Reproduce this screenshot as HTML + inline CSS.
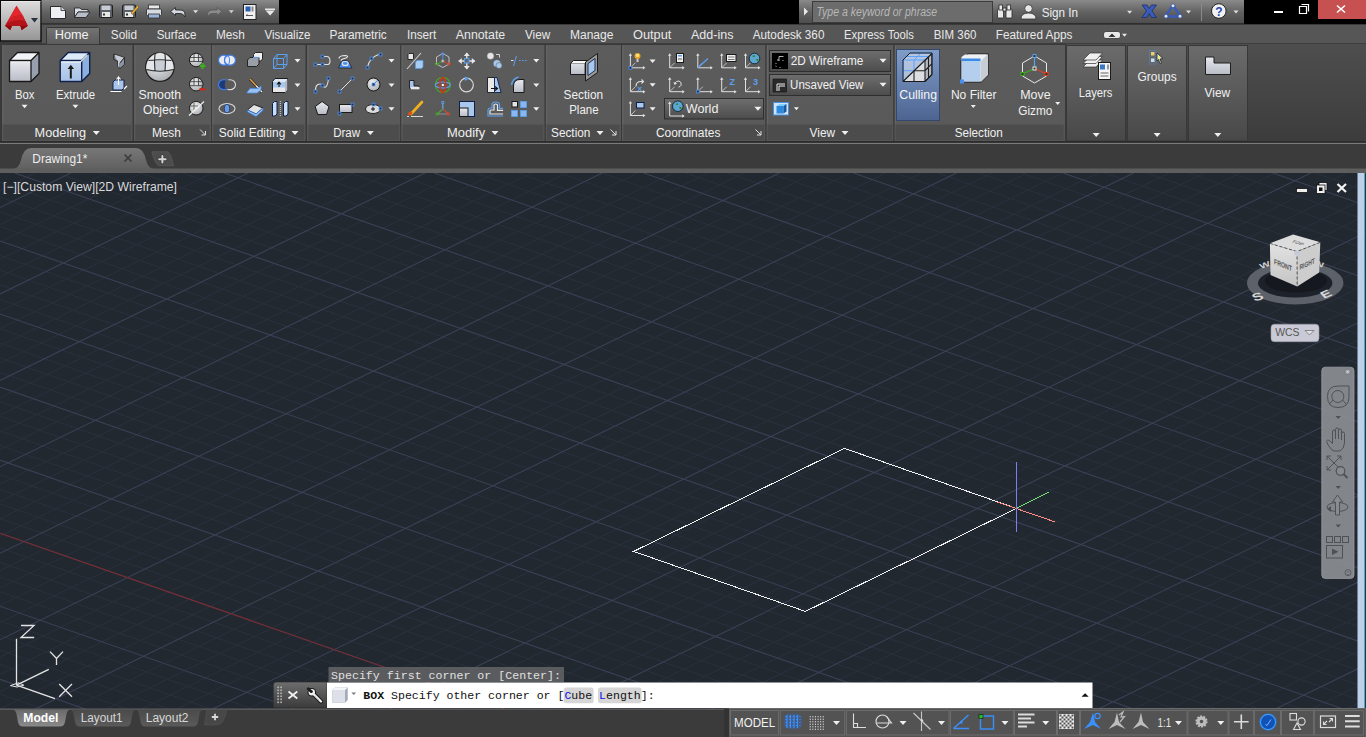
<!DOCTYPE html><html><head><meta charset="utf-8"><style>*{margin:0;padding:0}html,body{width:1366px;height:737px;overflow:hidden;background:#3b3b3b;font-family:"Liberation Sans",sans-serif}</style></head><body><svg width="1366" height="737" viewBox="0 0 1366 737" style="position:absolute;left:0;top:0;font-family:&quot;Liberation Sans&quot;,sans-serif"><defs>
<linearGradient id="gQat" x1="0" y1="0" x2="0" y2="1"><stop offset="0" stop-color="#8a8a8a"/><stop offset=".5" stop-color="#626262"/><stop offset="1" stop-color="#4c4c4c"/></linearGradient>
<linearGradient id="gApp" x1="0" y1="0" x2="0" y2="1"><stop offset="0" stop-color="#dcdcdc"/><stop offset="1" stop-color="#969696"/></linearGradient>
<linearGradient id="gPanel" x1="0" y1="0" x2="0" y2="1"><stop offset="0" stop-color="#5c5c5c"/><stop offset="1" stop-color="#595959"/></linearGradient>
<linearGradient id="gCPanel" x1="0" y1="0" x2="0" y2="1"><stop offset="0" stop-color="#6b6b6b"/><stop offset="1" stop-color="#484848"/></linearGradient>
<linearGradient id="gRib" x1="0" y1="0" x2="0" y2="1"><stop offset="0" stop-color="#4e4e4e"/><stop offset="1" stop-color="#3c3c3c"/></linearGradient>
<linearGradient id="gDrop" x1="0" y1="0" x2="0" y2="1"><stop offset="0" stop-color="#6e6e6e"/><stop offset="1" stop-color="#4c4c4c"/></linearGradient>
<linearGradient id="gCull" x1="0" y1="0" x2="0" y2="1"><stop offset="0" stop-color="#809cc8"/><stop offset="1" stop-color="#4d6491"/></linearGradient>
<linearGradient id="gFtab" x1="0" y1="0" x2="0" y2="1"><stop offset="0" stop-color="#777777"/><stop offset="1" stop-color="#5c5c5c"/></linearGradient>
<linearGradient id="gCmd" x1="0" y1="0" x2="0" y2="1"><stop offset="0" stop-color="#6e6e6e"/><stop offset="1" stop-color="#3a3a3a"/></linearGradient>
<linearGradient id="gWhiteCube" x1="0" y1="0" x2="0" y2="1"><stop offset="0" stop-color="#e8eaee"/><stop offset="1" stop-color="#b8bcc6"/></linearGradient>
<linearGradient id="gBlueFace" x1="0" y1="0" x2="0" y2="1"><stop offset="0" stop-color="#c4d8f0"/><stop offset="1" stop-color="#a6c2e6"/></linearGradient>
<radialGradient id="gSphere" cx=".4" cy=".35" r=".7"><stop offset="0" stop-color="#f4f4f4"/><stop offset="1" stop-color="#a8aab0"/></radialGradient>
<linearGradient id="gVC" x1="0" y1="0" x2="0" y2="1"><stop offset="0" stop-color="#e2e2e2"/><stop offset="1" stop-color="#c4c4c4"/></linearGradient>
<linearGradient id="gModelTab" x1="0" y1="0" x2="0" y2="1"><stop offset="0" stop-color="#6a6a6a"/><stop offset="1" stop-color="#8a8a8a"/></linearGradient>
<linearGradient id="gLayTab" x1="0" y1="0" x2="0" y2="1"><stop offset="0" stop-color="#4a4a4a"/><stop offset="1" stop-color="#5a5a5a"/></linearGradient>
<linearGradient id="gHome" x1="0" y1="0" x2="0" y2="1"><stop offset="0" stop-color="#747474"/><stop offset="1" stop-color="#5c5c5c"/></linearGradient>
</defs>
<rect x="0" y="0" width="1366" height="24" fill="#000" />
<rect x="41" y="0" width="238" height="24" fill="url(#gQat)" />
<rect x="41" y="23" width="238" height="1" fill="#333" />
<path d="M50.5 6.5 H61 L65.5 10.5 V18.5 H50.5Z" fill="#eef0f4" stroke="#2a2a2a" stroke-width="1"/>
<path d="M61 6.5 V10.5 H65.5" fill="#cfd3da" stroke="#2a2a2a" stroke-width=".8"/>
<path d="M74.5 8 H80 L81.5 9.5 H88 V12 H78 L74.5 17.5Z" fill="#d8dce4" stroke="#2a2a2a" stroke-width=".9"/>
<path d="M74.5 17.5 L78 12 H90 L86 17.5Z" fill="#b8bec9" stroke="#2a2a2a" stroke-width=".9"/>
<rect x="99.5" y="5" width="13" height="12.5" fill="#5a5f68" stroke="#202020" stroke-width="1" rx="1"/>
<rect x="101.5" y="5.5" width="9" height="4.5" fill="#c8ccd2"/>
<rect x="102" y="12" width="8" height="5" fill="#e8e8e8"/><rect x="103" y="13.5" width="2" height="2" fill="#333"/>
<rect x="122.5" y="5" width="13" height="12.5" fill="#5a5f68" stroke="#202020" stroke-width="1" rx="1"/>
<rect x="124.5" y="5.5" width="9" height="4.5" fill="#c8ccd2"/>
<rect x="125" y="12" width="8" height="5" fill="#e8e8e8"/><rect x="126" y="13.5" width="2" height="2" fill="#333"/>
<path d="M131 13 L137.5 5.5 L139 7 L132.5 14.5Z" fill="#f0b030" stroke="#553" stroke-width=".6"/>
<rect x="148.5" y="5" width="11" height="4" fill="#e8e8e8" stroke="#333" stroke-width=".8"/>
<rect x="146.5" y="9" width="15" height="6.5" fill="#d8dce2" stroke="#333" stroke-width=".9" rx="1"/>
<rect x="148.5" y="14" width="11" height="4" fill="#9cb4d8" stroke="#333" stroke-width=".8"/>
<path d="M170.5 11.5 L175.5 7.5 V10 H180 Q185 10 185 15 V17 Q183.5 13.5 180 13.5 H175.5 V15.5Z" fill="#d4d8e0" stroke="#2a2a2a" stroke-width=".9"/>
<path d="M193.1 10.3L198.1 10.3L195.6 13.3Z" fill="#e0e0e0"/>
<path d="M222 11.5 L217 7.5 V10 H212.5 Q207.5 10 207.5 15 V17 Q209 13.5 212.5 13.5 H217 V15.5Z" fill="#8a8a8a" stroke="#555" stroke-width=".8"/>
<path d="M228.8 10.3L233.8 10.3L231.3 13.3Z" fill="#d0d0d0"/>
<rect x="243.5" y="4.5" width="12.5" height="15" fill="#f0f0f0" stroke="#222" stroke-width="1"/>
<rect x="245.5" y="6.5" width="5" height="5" fill="#2b5fb0"/><rect x="251.5" y="6.5" width="2" height="5" fill="#888"/>
<path d="M246 15.5 H253 M246 15.5 L247.5 14.5" stroke="#333" stroke-width=".8"/>
<rect x="265" y="8.5" width="10" height="1.5" fill="#e8e8e8"/>
<path d="M265.6 10.5L274.6 10.5L270.1 15.5Z" fill="#e8e8e8"/>
<rect x="799" y="0" width="445" height="24" fill="url(#gQat)" />
<rect x="799" y="23" width="445" height="1" fill="#2e2e2e" />
<path d="M804 7.5 L808 11.5 L804 15.5Z" fill="#e8e8e8"/>
<rect x="812.5" y="1.5" width="180" height="21" fill="#6c6c6c" stroke="#3c3c3c" stroke-width="1"/>
<text x="816.4" y="15.8" font-size="12" fill="#b8b8b8" font-weight="normal" font-family="Liberation Sans" font-style="italic" textLength="120.7" lengthAdjust="spacingAndGlyphs" >Type a keyword or phrase</text>
<g fill="#e8e8e8" stroke="#2a2a2a" stroke-width=".8"><rect x="997.5" y="9" width="6" height="9" rx="1"/><rect x="1006" y="9" width="6" height="9" rx="1"/><rect x="999" y="5" width="3.5" height="5"/><rect x="1007" y="5" width="3.5" height="5"/><rect x="1003" y="8" width="3" height="3"/></g>
<circle cx="1028.5" cy="8.5" r="3.8" fill="#e8e8e8" stroke="#333" stroke-width=".8"/>
<path d="M1021 19 Q1021 13 1028.5 13 Q1036 13 1036 19Z" fill="#e8e8e8" stroke="#333" stroke-width=".8"/>
<text x="1041.7" y="17.1" font-size="12" fill="#eeeeee" font-weight="normal" font-family="Liberation Sans" font-style="normal" textLength="36.4" lengthAdjust="spacingAndGlyphs" >Sign In</text>
<path d="M1127.1 10.7L1132.1 10.7L1129.6 13.7Z" fill="#e0e0e0"/>
<path d="M1142 5 H1147 L1149.2 8.5 L1151.5 5 H1156.5 L1152 11 L1156.5 17.5 H1151.5 L1149.2 13.5 L1147 17.5 H1142 L1146.5 11Z" fill="#3a5bb8" stroke="#1c2d6a" stroke-width=".8"/>
<path d="M1173 5.5 L1180.5 16.5 H1165.5Z" fill="none" stroke="#3a5bb8" stroke-width="2.4" stroke-linejoin="round"/>
<circle cx="1173" cy="5.8" r="2" fill="#dfe6f5" stroke="#2a4a9a" stroke-width=".8"/><circle cx="1166" cy="16.2" r="2" fill="#dfe6f5" stroke="#2a4a9a" stroke-width=".8"/><circle cx="1180" cy="16.2" r="2" fill="#dfe6f5" stroke="#2a4a9a" stroke-width=".8"/>
<path d="M1186.0 10.5L1191.0 10.5L1188.5 13.5Z" fill="#e0e0e0"/>
<rect x="1201" y="3" width="1" height="18" fill="#8a8a8a" />
<circle cx="1218.8" cy="11" r="7.3" fill="#f2f2f2" stroke="#202020" stroke-width="1"/>
<text x="1218.8" y="15.5" font-size="12" font-weight="bold" fill="#2748b0" text-anchor="middle" font-family="Liberation Sans">?</text>
<path d="M1233.5 10.5L1238.5 10.5L1236.0 13.5Z" fill="#e0e0e0"/>
<rect x="1318" y="0" width="48" height="19" fill="#c75050" />
<rect x="1274" y="11" width="9" height="2" fill="#ffffff" />
<path d="M1301.5 4.5 H1308.5 V11.5 M1299.5 6.5 H1306.5 V13.5 H1299.5Z" fill="none" stroke="#fff" stroke-width="1.2"/>
<path d="M1337 5.5 L1345 12.5 M1345 5.5 L1337 12.5" stroke="#fff" stroke-width="1.6"/>
<rect x="42" y="24" width="1324" height="20" fill="#565656" />
<rect x="0" y="24" width="1366" height="1" fill="#3a3a3a" />
<rect x="42" y="43" width="1324" height="1.5" fill="#3e3e3e" />
<path d="M46.5 44 V28.5 Q46.5 27.5 47.5 27.5 H98.5 Q99.5 27.5 99.5 28.5 V44" fill="url(#gHome)" stroke="#363636" stroke-width="1"/>
<text x="54.8" y="39.2" font-size="12" fill="#f2f2f2" font-weight="normal" font-family="Liberation Sans" font-style="normal" textLength="33.9" lengthAdjust="spacingAndGlyphs" >Home</text>
<text x="110.8" y="39.2" font-size="12" fill="#e8e8e8" font-weight="normal" font-family="Liberation Sans" font-style="normal" textLength="26.2" lengthAdjust="spacingAndGlyphs" >Solid</text>
<text x="156.7" y="39.2" font-size="12" fill="#e8e8e8" font-weight="normal" font-family="Liberation Sans" font-style="normal" textLength="39.7" lengthAdjust="spacingAndGlyphs" >Surface</text>
<text x="215.9" y="39.2" font-size="12" fill="#e8e8e8" font-weight="normal" font-family="Liberation Sans" font-style="normal" textLength="28.9" lengthAdjust="spacingAndGlyphs" >Mesh</text>
<text x="264.5" y="39.2" font-size="12" fill="#e8e8e8" font-weight="normal" font-family="Liberation Sans" font-style="normal" textLength="45.9" lengthAdjust="spacingAndGlyphs" >Visualize</text>
<text x="329.5" y="39.2" font-size="12" fill="#e8e8e8" font-weight="normal" font-family="Liberation Sans" font-style="normal" textLength="57.3" lengthAdjust="spacingAndGlyphs" >Parametric</text>
<text x="406.9" y="39.2" font-size="12" fill="#e8e8e8" font-weight="normal" font-family="Liberation Sans" font-style="normal" textLength="29.3" lengthAdjust="spacingAndGlyphs" >Insert</text>
<text x="455.8" y="39.2" font-size="12" fill="#e8e8e8" font-weight="normal" font-family="Liberation Sans" font-style="normal" textLength="49.4" lengthAdjust="spacingAndGlyphs" >Annotate</text>
<text x="524.9" y="39.2" font-size="12" fill="#e8e8e8" font-weight="normal" font-family="Liberation Sans" font-style="normal" textLength="25.3" lengthAdjust="spacingAndGlyphs" >View</text>
<text x="570.0" y="39.2" font-size="12" fill="#e8e8e8" font-weight="normal" font-family="Liberation Sans" font-style="normal" textLength="43.4" lengthAdjust="spacingAndGlyphs" >Manage</text>
<text x="633.0" y="39.2" font-size="12" fill="#e8e8e8" font-weight="normal" font-family="Liberation Sans" font-style="normal" textLength="38.4" lengthAdjust="spacingAndGlyphs" >Output</text>
<text x="691.0" y="39.2" font-size="12" fill="#e8e8e8" font-weight="normal" font-family="Liberation Sans" font-style="normal" textLength="42.4" lengthAdjust="spacingAndGlyphs" >Add-ins</text>
<text x="752.8" y="39.2" font-size="12" fill="#e8e8e8" font-weight="normal" font-family="Liberation Sans" font-style="normal" textLength="71.6" lengthAdjust="spacingAndGlyphs" >Autodesk 360</text>
<text x="844.1" y="39.2" font-size="12" fill="#e8e8e8" font-weight="normal" font-family="Liberation Sans" font-style="normal" textLength="69.8" lengthAdjust="spacingAndGlyphs" >Express Tools</text>
<text x="933.7" y="39.2" font-size="12" fill="#e8e8e8" font-weight="normal" font-family="Liberation Sans" font-style="normal" textLength="42.7" lengthAdjust="spacingAndGlyphs" >BIM 360</text>
<text x="995.8" y="39.2" font-size="12" fill="#e8e8e8" font-weight="normal" font-family="Liberation Sans" font-style="normal" textLength="76.6" lengthAdjust="spacingAndGlyphs" >Featured Apps</text>
<rect x="1103.5" y="31.5" width="17" height="7" rx="2.5" fill="#e8e8e8" stroke="#333" stroke-width=".8"/>
<path d="M1108.5 37 L1112 33.5 L1115.5 37Z" fill="#333"/>
<path d="M1122.0 33.8L1127.0 33.8L1124.5 36.8Z" fill="#e8e8e8"/>
<rect x="0" y="0" width="41.5" height="41.5" fill="#0a0a0a" />
<rect x="1" y="1" width="39.3" height="39.3" fill="url(#gApp)" />
<rect x="1" y="1" width="39.3" height="1" fill="#e8e8e8" />
<path d="M16.5 5.8 L5.1 25.8 L10.2 29.9 L11.9 26.1 H20.4 L21.7 29.9 L27.8 25.8 Z" fill="#b8141a"/>
<path d="M16.5 5.8 L9 19 Q16 14.5 23 15.5 Z" fill="#e2262c"/>
<path d="M9 19 Q16 14.5 23 15.5 L25.5 21 Q16 19 7 23Z" fill="#d01f25"/>
<path d="M7 23 Q16 19 25.5 21 L27.8 25.8 L21.7 29.9 L20.4 26.1 H11.9 L10.2 29.9 L5.1 25.8Z" fill="#b31419"/>
<path d="M5.1 25.8 L10.2 29.9 L11.9 26.1Z M27.8 25.8 L21.7 29.9 L20.4 26.1Z" fill="#8e0c10"/>
<path d="M30.9 18 L38 18 L34.5 22.4Z" fill="#2a3040"/>
<rect x="0" y="44" width="1366" height="98" fill="url(#gRib)" />
<rect x="0" y="44" width="1" height="98" fill="#3a3a3a" />
<rect x="1.5" y="44.5" width="131.5" height="97" fill="url(#gPanel)" stroke="#393939" stroke-width="1"/>
<rect x="2.5" y="45" width="1" height="96" fill="#656565" />
<rect x="3.0" y="124.5" width="128.5" height="16" fill="#4c4c4c" stroke="#555" stroke-width="1"/>
<rect x="133.5" y="44.5" width="78.0" height="97" fill="url(#gPanel)" stroke="#393939" stroke-width="1"/>
<rect x="134.5" y="45" width="1" height="96" fill="#656565" />
<rect x="135.0" y="124.5" width="75.0" height="16" fill="#4c4c4c" stroke="#555" stroke-width="1"/>
<rect x="211.5" y="44.5" width="94.5" height="97" fill="url(#gPanel)" stroke="#393939" stroke-width="1"/>
<rect x="212.5" y="45" width="1" height="96" fill="#656565" />
<rect x="213.0" y="124.5" width="91.5" height="16" fill="#4c4c4c" stroke="#555" stroke-width="1"/>
<rect x="306.5" y="44.5" width="94.3" height="97" fill="url(#gPanel)" stroke="#393939" stroke-width="1"/>
<rect x="307.5" y="45" width="1" height="96" fill="#656565" />
<rect x="308.0" y="124.5" width="91.3" height="16" fill="#4c4c4c" stroke="#555" stroke-width="1"/>
<rect x="400.8" y="44.5" width="144.4" height="97" fill="url(#gPanel)" stroke="#393939" stroke-width="1"/>
<rect x="401.8" y="45" width="1" height="96" fill="#656565" />
<rect x="402.3" y="124.5" width="141.4" height="16" fill="#4c4c4c" stroke="#555" stroke-width="1"/>
<rect x="545.2" y="44.5" width="76.3" height="97" fill="url(#gPanel)" stroke="#393939" stroke-width="1"/>
<rect x="546.2" y="45" width="1" height="96" fill="#656565" />
<rect x="546.7" y="124.5" width="73.3" height="16" fill="#4c4c4c" stroke="#555" stroke-width="1"/>
<rect x="621.5" y="44.5" width="144.5" height="97" fill="url(#gPanel)" stroke="#393939" stroke-width="1"/>
<rect x="622.5" y="45" width="1" height="96" fill="#656565" />
<rect x="623.0" y="124.5" width="141.5" height="16" fill="#4c4c4c" stroke="#555" stroke-width="1"/>
<rect x="766.0" y="44.5" width="128.0" height="97" fill="url(#gPanel)" stroke="#393939" stroke-width="1"/>
<rect x="767" y="45" width="1" height="96" fill="#656565" />
<rect x="767.5" y="124.5" width="125.0" height="16" fill="#4c4c4c" stroke="#555" stroke-width="1"/>
<rect x="894.0" y="44.5" width="171.5" height="97" fill="url(#gPanel)" stroke="#393939" stroke-width="1"/>
<rect x="895" y="45" width="1" height="96" fill="#656565" />
<rect x="895.5" y="124.5" width="168.5" height="16" fill="#4c4c4c" stroke="#555" stroke-width="1"/>
<rect x="1066.5" y="45.5" width="59.0" height="95.5" fill="url(#gCPanel)" stroke="#383838" stroke-width="1"/>
<rect x="1127.5" y="45.5" width="59.0" height="95.5" fill="url(#gCPanel)" stroke="#383838" stroke-width="1"/>
<rect x="1188.5" y="45.5" width="59.0" height="95.5" fill="url(#gCPanel)" stroke="#383838" stroke-width="1"/>
<rect x="0" y="141" width="1366" height="1.5" fill="#2c2c2c" />
<text x="34.6" y="137.2" font-size="12" fill="#f0f0f0" font-weight="normal" font-family="Liberation Sans" font-style="normal" textLength="51.6" lengthAdjust="spacingAndGlyphs" >Modeling</text>
<path d="M92.8 131.0L99.8 131.0L96.3 135.0Z" fill="#f0f0f0"/>
<text x="151.9" y="137.2" font-size="12" fill="#f0f0f0" font-weight="normal" font-family="Liberation Sans" font-style="normal" textLength="29.0" lengthAdjust="spacingAndGlyphs" >Mesh</text>
<path d="M200 129.5 L205.5 135 M205.5 131 V135 H201.5" stroke="#e0e0e0" stroke-width="1" fill="none"/>
<text x="218.8" y="137.2" font-size="12" fill="#f0f0f0" font-weight="normal" font-family="Liberation Sans" font-style="normal" textLength="66.5" lengthAdjust="spacingAndGlyphs" >Solid Editing</text>
<path d="M291.5 131.0L298.5 131.0L295.0 135.0Z" fill="#f0f0f0"/>
<text x="333.2" y="137.2" font-size="12" fill="#f0f0f0" font-weight="normal" font-family="Liberation Sans" font-style="normal" textLength="26.9" lengthAdjust="spacingAndGlyphs" >Draw</text>
<path d="M366.9 131.0L373.9 131.0L370.4 135.0Z" fill="#f0f0f0"/>
<text x="447.0" y="137.2" font-size="12" fill="#f0f0f0" font-weight="normal" font-family="Liberation Sans" font-style="normal" textLength="38.1" lengthAdjust="spacingAndGlyphs" >Modify</text>
<path d="M491.5 131.0L498.5 131.0L495.0 135.0Z" fill="#f0f0f0"/>
<text x="551.0" y="137.2" font-size="12" fill="#f0f0f0" font-weight="normal" font-family="Liberation Sans" font-style="normal" textLength="39.4" lengthAdjust="spacingAndGlyphs" >Section</text>
<path d="M596.5 131.0L603.5 131.0L600.0 135.0Z" fill="#f0f0f0"/>
<path d="M610.5 129.5 L616 135 M616 131 V135 H612" stroke="#e0e0e0" stroke-width="1" fill="none"/>
<text x="655.9" y="137.2" font-size="12" fill="#f0f0f0" font-weight="normal" font-family="Liberation Sans" font-style="normal" textLength="64.5" lengthAdjust="spacingAndGlyphs" >Coordinates</text>
<path d="M755.5 129.5 L761 135 M761 131 V135 H757" stroke="#e0e0e0" stroke-width="1" fill="none"/>
<text x="809.6" y="137.2" font-size="12" fill="#f0f0f0" font-weight="normal" font-family="Liberation Sans" font-style="normal" textLength="25.4" lengthAdjust="spacingAndGlyphs" >View</text>
<path d="M841.5 131.0L848.5 131.0L845.0 135.0Z" fill="#f0f0f0"/>
<text x="954.7" y="137.2" font-size="12" fill="#f0f0f0" font-weight="normal" font-family="Liberation Sans" font-style="normal" textLength="48.1" lengthAdjust="spacingAndGlyphs" >Selection</text>
<path d="M9.5 60.5H31.0V81.5H9.5Z" fill="url(#gWhiteCube)"/>
<path d="M9.5 60.5L17.5 52.5H39.0L31.0 60.5Z" fill="#f3f4f7"/>
<path d="M31.0 60.5L39.0 52.5V73.5L31.0 81.5Z" fill="#98a0ae"/>
<path d="M9.5 60.5L17.5 52.5H39.0V73.5L31.0 81.5H9.5Z M9.5 60.5H31.0L39.0 52.5 M31.0 60.5V81.5" fill="none" stroke="#181818" stroke-width="1.3" stroke-linejoin="round"/>
<path d="M11 62 H30" stroke="#fff" stroke-width="1" opacity=".6"/>
<path d="M60.2 60.5H81.7V81.5H60.2Z" fill="url(#gBlueFace)"/>
<path d="M60.2 60.5L68.2 52.5H89.7L81.7 60.5Z" fill="#dce9f8"/>
<path d="M81.7 60.5L89.7 52.5V73.5L81.7 81.5Z" fill="#8cb0de"/>
<path d="M60.2 60.5L68.2 52.5H89.7V73.5L81.7 81.5H60.2Z M60.2 60.5H81.7L89.7 52.5 M81.7 60.5V81.5" fill="none" stroke="#10204a" stroke-width="1.4" stroke-linejoin="round"/>
<path d="M61.5 62 H80.5 L87.5 55" stroke="#fff" stroke-width="1.1" fill="none" opacity=".9"/>
<path d="M70.8 78.5 V68" stroke="#1a1a1a" stroke-width="2"/><path d="M67.6 69 L70.8 64.8 L74 69Z" fill="#1a1a1a"/>
<text x="15.0" y="98.8" font-size="12" fill="#f0f0f0" font-weight="normal" font-family="Liberation Sans" font-style="normal" textLength="19.5" lengthAdjust="spacingAndGlyphs" >Box</text>
<text x="56.0" y="98.9" font-size="12" fill="#f0f0f0" font-weight="normal" font-family="Liberation Sans" font-style="normal" textLength="39.2" lengthAdjust="spacingAndGlyphs" >Extrude</text>
<path d="M21.6 104.8L27.6 104.8L24.6 108.2Z" fill="#f0f0f0"/>
<path d="M72.4 104.8L78.4 104.8L75.4 108.2Z" fill="#f0f0f0"/>
<path d="M114 54 L119 55.5 L124.5 57.5 L120 63 V68.5 L117.5 66.5 V61 L114 59.5Z" fill="#c8ccd6" stroke="#222" stroke-width=".8"/>
<path d="M117.5 61 L114 59.5 V54 M120 63 L124.5 57.5 V64.5 L120 68.5" fill="#8a94a6" stroke="#222" stroke-width=".8"/>
<path d="M113 82 L115 80 H124 V88 L122 90 H113Z" fill="#a8c4e8" stroke="#10204a" stroke-width="1"/>
<path d="M118.5 85 V77.5 M116.5 79.5 L118.5 77 L120.5 79.5" stroke="#fff" stroke-width="1.1" fill="none"/>
<path d="M110.5 91.5 H121.5 M124 89 L127 86" stroke="#fff" stroke-width="1.2"/>
<circle cx="159.9" cy="67.1" r="14.3" fill="url(#gSphere)" stroke="#1e1e1e" stroke-width="1.2"/>
<path d="M146.2 69 Q160 72.5 173.6 69 Q173 55 160 52.8 Q147 55 146.2 69Z" fill="#e4e6ea"/>
<path d="M155 61 H165 V70.8 Q160 71.3 155 70.8Z" fill="#c8cdd6"/>
<path d="M148.5 60.5 Q160 59 171.5 60.5 M146.2 69.5 Q160 73 173.6 69.5 M155 53.8 Q154 62 155 71 M165 53.8 Q166 62 165 71" stroke="#2a2a2a" stroke-width="1.1" fill="none"/>
<text x="138.6" y="98.7" font-size="12" fill="#f0f0f0" font-weight="normal" font-family="Liberation Sans" font-style="normal" textLength="42.5" lengthAdjust="spacingAndGlyphs" >Smooth</text>
<text x="143.1" y="114.2" font-size="12" fill="#f0f0f0" font-weight="normal" font-family="Liberation Sans" font-style="normal" textLength="35.0" lengthAdjust="spacingAndGlyphs" >Object</text>
<circle cx="196.2" cy="60.0" r="6.8" fill="url(#gSphere)" stroke="#1e1e1e" stroke-width="1"/>
<path d="M189.8 57.5 H202.6 M189.8 61.5 H202.6 M194 54.0 V61.5 M198.5 54.0 V61.5" stroke="#333" stroke-width=".8"/>
<circle cx="196.2" cy="84.2" r="6.8" fill="url(#gSphere)" stroke="#1e1e1e" stroke-width="1"/>
<path d="M189.8 81.7 H202.6 M189.8 85.7 H202.6 M194 78.2 V85.7 M198.5 78.2 V85.7" stroke="#333" stroke-width=".8"/>
<circle cx="196.2" cy="108.2" r="6.8" fill="url(#gSphere)" stroke="#1e1e1e" stroke-width="1"/>
<path d="M199.8 66 H205.5 M202.6 63 V69" stroke="#3cb018" stroke-width="2.2"/>
<path d="M199.5 89.3 H205.5" stroke="#e02010" stroke-width="2"/>
<path d="M194 103 V110 M189.8 106 H198" stroke="#444" stroke-width=".8"/><path d="M189 115.5 L204 101.5" stroke="#f0f0f0" stroke-width="1.2"/>
<ellipse cx="224" cy="60.2" rx="5.5" ry="5" fill="#e8eaee" stroke="#3f7ee8" stroke-width="1.2"/><ellipse cx="230" cy="60.2" rx="5.5" ry="5" fill="#e8eaee" stroke="#3f7ee8" stroke-width="1.2"/>
<ellipse cx="227" cy="60.2" rx="2.5" ry="4.5" fill="none" stroke="#3f7ee8" stroke-width="1"/>
<ellipse cx="230" cy="84.7" rx="5.5" ry="5" fill="none" stroke="#e0e0e0" stroke-width="1.1"/><ellipse cx="224" cy="84.7" rx="5.5" ry="5" fill="#1c3a78" stroke="#3f7ee8" stroke-width="1.2"/>
<ellipse cx="227.5" cy="84.7" rx="2.7" ry="4.6" fill="#5a5a5a"/>
<ellipse cx="227" cy="108.6" rx="8" ry="5" fill="none" stroke="#d8d8d8" stroke-width="1.1"/><ellipse cx="227" cy="108.6" rx="2.6" ry="4.2" fill="#6c9ae0" stroke="#1c3a78" stroke-width=".8"/>
<path d="M253.5 54.5 L255.5 52.5 H262.5 V59 L260.5 61 H253.5Z" fill="#f0f0f0" stroke="#1a1a1a" stroke-width=".9"/>
<path d="M247.5 60 L250 57.5 H259 V64 L256.5 66.5 H247.5Z" fill="#9a9ea6" stroke="#1a1a1a" stroke-width=".9"/>
<path d="M253 57.5 H259" stroke="#5a9ae8" stroke-width="1.2"/>
<path d="M250 79 L262 92" stroke="#1a1a1a" stroke-width="2.6"/><path d="M250 79 L256 85.5" stroke="#e0a050" stroke-width="1.6"/><path d="M256 85.5 L262 92" stroke="#e8e8e8" stroke-width="1.6"/>
<path d="M247 92.5 L250 88.5 H258 L261 86 V90 L257 93 H247Z" fill="#9ac0ee" stroke="#4a8ae8" stroke-width=".8"/>
<path d="M247.5 110 L254 104.5 L263 108 L256 114Z" fill="#e4e4e4" stroke="#1a1a1a" stroke-width=".9"/>
<path d="M247.5 110 V112 L256 116.5 L263 110.5 V108 L256 114Z" fill="#9ac4ee" stroke="#3a7ad8" stroke-width=".9"/>
<path d="M273.5 58.5 H283.5 V68.5 H273.5Z M277 54.5 H287 V64.5 H277Z M273.5 58.5 L277 54.5 M283.5 58.5 L287 54.5 M283.5 68.5 L287 64.5 M273.5 68.5 L277 64.5" fill="none" stroke="#5aa0f0" stroke-width="1"/>
<path d="M272.5 81.5 L275 78.5 H287.5 V90 L285 92.5 H272.5Z" fill="#dde8f6" stroke="#1a1a1a" stroke-width="1"/>
<path d="M273 82 H285 V87.5 H273Z" fill="#a8c8ee"/><path d="M273 88 H285 V92 H273Z" fill="#e8e8e8"/><path d="M285 82 L287.5 79 V90 L285 92.5Z" fill="#b0b8c4"/>
<path d="M279 87 V83 M277 84.5 L279 82.2 L281 84.5" stroke="#111" stroke-width="1.1" fill="none"/>
<path d="M272.5 103.5 L274.5 101.5 H277 V114 L275 116 H272.5Z" fill="#c8def6" stroke="#10204a" stroke-width="1"/>
<path d="M283.5 103.5 L285.5 101.5 H288 V114 L286 116 H283.5Z" fill="#c8def6" stroke="#10204a" stroke-width="1"/>
<path d="M280.3 101 V117" stroke="#e8e8e8" stroke-width=".9" stroke-dasharray="1 1"/>
<path d="M294.5 59.0L300.5 59.0L297.5 62.5Z" fill="#f0f0f0"/>
<path d="M294.5 83.5L300.5 83.5L297.5 87.0Z" fill="#f0f0f0"/>
<path d="M294.5 107.3L300.5 107.3L297.5 110.8Z" fill="#f0f0f0"/>
<path d="M315.5 64.5 H328 Q330 64.5 330 61 Q330 56.5 326.5 56.5 H322.5" stroke="#e0e0e0" stroke-width="1.1" fill="none"/>
<rect x="314.1" y="63.1" width="2.8" height="2.8" fill="#2a2a2a" stroke="#4a90f0" stroke-width=".85"/>
<rect x="321.1" y="63.1" width="2.8" height="2.8" fill="#2a2a2a" stroke="#4a90f0" stroke-width=".85"/>
<rect x="321.1" y="55.1" width="2.8" height="2.8" fill="#2a2a2a" stroke="#4a90f0" stroke-width=".85"/>
<path d="M339 58.5 Q339 55.5 345.5 55.5 Q349.5 56 346 58 Q340 59.5 341.5 61 Q345 62.5 348 60.5" stroke="#e8e8e8" stroke-width="1.1" fill="none"/>
<path d="M338.5 68 L342 60.5 H348 L352 68Z" fill="#4a8ef0" stroke="#1a1a1a" stroke-width=".7"/>
<ellipse cx="345.2" cy="63.5" rx="3" ry="2" fill="none" stroke="#e8e8e8" stroke-width="1.1"/>
<path d="M367.5 67.5 Q369 58 378.5 54.5" stroke="#e0e0e0" stroke-width="1.1" fill="none"/>
<rect x="366.1" y="66.1" width="2.8" height="2.8" fill="#2a2a2a" stroke="#4a90f0" stroke-width=".85"/>
<rect x="370.1" y="57.1" width="2.8" height="2.8" fill="#2a2a2a" stroke="#4a90f0" stroke-width=".85"/>
<rect x="379.1" y="53.1" width="2.8" height="2.8" fill="#2a2a2a" stroke="#4a90f0" stroke-width=".85"/>
<path d="M315.5 91.5 Q315 84 320 84 Q322.5 84 323.5 86.5 Q326.5 89 328 82 L328.5 78.5" stroke="#e0e0e0" stroke-width="1.1" fill="none"/>
<rect x="314.1" y="90.1" width="2.8" height="2.8" fill="#2a2a2a" stroke="#4a90f0" stroke-width=".85"/>
<rect x="321.1" y="84.1" width="2.8" height="2.8" fill="#2a2a2a" stroke="#4a90f0" stroke-width=".85"/>
<rect x="327.1" y="77.1" width="2.8" height="2.8" fill="#2a2a2a" stroke="#4a90f0" stroke-width=".85"/>
<path d="M339.5 91.5 L352.5 78.5" stroke="#e0e0e0" stroke-width="1"/>
<rect x="338.1" y="90.1" width="2.8" height="2.8" fill="#2a2a2a" stroke="#4a90f0" stroke-width=".85"/>
<rect x="351.1" y="77.1" width="2.8" height="2.8" fill="#2a2a2a" stroke="#4a90f0" stroke-width=".85"/>
<circle cx="373.5" cy="84.5" r="6.5" fill="url(#gSphere)" stroke="#1a1a1a" stroke-width="1"/><path d="M373.5 84.5 L378 80" stroke="#4a90f0" stroke-width="1"/>
<rect x="372.1" y="83.1" width="2.8" height="2.8" fill="#2a2a2a" stroke="#4a90f0" stroke-width=".85"/>
<path d="M322.1 101.5 L329 106.5 L326.5 114.5 H317.7 L315.2 106.5Z" fill="url(#gWhiteCube)" stroke="#1a1a1a" stroke-width="1"/>
<rect x="339.5" y="104.5" width="12.5" height="8" fill="url(#gWhiteCube)" stroke="#1a1a1a" stroke-width="1"/>
<rect x="338.1" y="112.1" width="2.8" height="2.8" fill="#2a2a2a" stroke="#4a90f0" stroke-width=".85"/>
<rect x="351.1" y="103.1" width="2.8" height="2.8" fill="#2a2a2a" stroke="#4a90f0" stroke-width=".85"/>
<ellipse cx="373" cy="109" rx="7.5" ry="4.5" fill="#dcdcdc" stroke="#1a1a1a" stroke-width=".9"/><path d="M373 107 V111 M371 109 H375" stroke="#111" stroke-width="1"/>
<rect x="372.1" y="103.1" width="2.8" height="2.8" fill="#2a2a2a" stroke="#4a90f0" stroke-width=".85"/>
<rect x="379.1" y="107.1" width="2.8" height="2.8" fill="#2a2a2a" stroke="#4a90f0" stroke-width=".85"/>
<path d="M388.5 59.0L394.5 59.0L391.5 62.5Z" fill="#f0f0f0"/>
<path d="M388.5 83.5L394.5 83.5L391.5 87.0Z" fill="#f0f0f0"/>
<path d="M388.5 107.3L394.5 107.3L391.5 110.8Z" fill="#f0f0f0"/>
<path d="M407 69 L421 53" stroke="#d0d0d0" stroke-width="1.1"/>
<path d="M408 54.5 L409 53.5 H413.5 V58.5 L412.5 59.5 H408Z" fill="#e8e8e8" stroke="#1a1a1a" stroke-width=".9"/>
<path d="M415.5 62 L417 60.5 H423 V67 L421.5 68.5 H415.5Z" fill="#a8cbf2" stroke="#5a9ae8" stroke-width=".8"/>
<path d="M442.8 53.5 L449 57 V64 L442.8 67.5 L436.5 64 V57Z" fill="none" stroke="#c8c8c8" stroke-width=".9"/>
<path d="M442.8 61 V54" stroke="#4a90f0" stroke-width="1"/><path d="M442.8 61 L437.5 64" stroke="#3cb018" stroke-width="1"/><path d="M442.8 61 L448.5 64" stroke="#e04020" stroke-width="1"/>
<circle cx="442.8" cy="54" r="1.2" fill="none" stroke="#4a90f0"/><circle cx="436.5" cy="64" r="1.2" fill="none" stroke="#3cb018"/><circle cx="449" cy="64" r="1.2" fill="none" stroke="#e04020"/><circle cx="442.8" cy="61" r="1.2" fill="#ddd" stroke="#999"/>
<path d="M466.8 53 V69 M458.8 61 H474.8" stroke="#e0e0e0" stroke-width="1.4"/>
<path d="M463.8 56 L466.8 52.5 L469.8 56Z M463.8 66 L466.8 69.5 L469.8 66Z M461.8 58 L458.3 61 L461.8 64Z M471.8 58 L475.3 61 L471.8 64Z" fill="#e8e8e8"/>
<rect x="464.5" y="58.5" width="4.5" height="4.5" fill="#666" stroke="#5aa0f0" stroke-width="1"/>
<circle cx="490.5" cy="56" r="3.6" fill="#e4e4e4" stroke="#555" stroke-width=".5"/><circle cx="497" cy="63.5" r="3.8" fill="#a8c8ee" stroke="#555" stroke-width=".5"/><circle cx="499" cy="65.5" r="3" fill="#a8c8ee" stroke="#555" stroke-width=".5"/>
<path d="M496 54.5 H499.5 V57.5" stroke="#e0e0e0" stroke-width=".9" fill="none"/>
<path d="M511 60.5 H513.5" stroke="#e0e0e0" stroke-width="1"/><path d="M519 60.5 H527" stroke="#5aa0f0" stroke-width="1" stroke-dasharray="1.6 1.4"/><path d="M516.5 56 L513.5 66" stroke="#5aa0f0" stroke-width="1"/>
<path d="M409.5 80.5 H414 V86 H419 V89.5 H411 L409.5 88Z" fill="#a8c4e8" stroke="#1a1a1a" stroke-width=".9"/>
<path d="M411 87 H419.5 V89.5 H411Z" fill="#e8e8e8"/>
<ellipse cx="442.8" cy="85" rx="7.5" ry="7.5" fill="none" stroke="#3cb018" stroke-width="1.1"/><ellipse cx="442.8" cy="85" rx="7.5" ry="3" fill="none" stroke="#5aa0f0" stroke-width="1.1"/><ellipse cx="442.8" cy="85" rx="3" ry="7.5" fill="none" stroke="#e03010" stroke-width="1.4"/>
<rect x="441.8" y="84" width="2" height="2" fill="#fff"/>
<circle cx="466.5" cy="85" r="6.8" fill="none" stroke="#d8d8d8" stroke-width="1.2"/><path d="M464.5 76.5 L469 78.5 L465 81Z" fill="#5aa0f0"/>
<path d="M487.5 77.5 H494.5 V92.5 H487.5Z" fill="#e8e8e8" stroke="#1a1a1a" stroke-width=".9"/><path d="M494.5 77.5 H497 L501 92.5 H494.5Z" fill="#a8c8ee" stroke="#10204a" stroke-width=".9"/>
<path d="M491 88.5 H497 M495 86.5 L497.5 88.5 L495 90.5" stroke="#111" stroke-width="1.1" fill="none"/>
<path d="M513.5 92.5 V86 Q513.5 79.5 520 79.5 H524 V92.5Z" fill="url(#gWhiteCube)" stroke="#1a1a1a" stroke-width="1"/>
<path d="M511.5 85 Q512.5 78.5 518.5 77" stroke="#5aa0f0" stroke-width="1.4" fill="none"/>
<path d="M411 114 L422 102" stroke="#f0b020" stroke-width="2.6" stroke-linecap="round"/><path d="M408 115 Q408 111 411.5 111.5 L412.5 113 Q412 116 408 115Z" fill="#e05010"/>
<path d="M407 116.5 H409 M411 116.5 H423" stroke="#d8d8d8" stroke-width="1"/>
<path d="M442.8 103 V109 L437 114 H448.5 L442.8 109" fill="none" stroke="#999" stroke-width=".8"/><path d="M442.8 103 V109" stroke="#5aa0f0" stroke-width="1"/><path d="M437 114 L442.8 109" stroke="#3cb018" stroke-width="1"/><path d="M448.5 114 L442.8 109" stroke="#e04020" stroke-width="1"/>
<rect x="441.8" y="101.5" width="2" height="2" fill="none" stroke="#5aa0f0" stroke-width=".8"/><rect x="436" y="113" width="2" height="2" fill="none" stroke="#3cb018" stroke-width=".8"/><rect x="447.5" y="113" width="2" height="2" fill="none" stroke="#e04020" stroke-width=".8"/>
<rect x="459.5" y="101.5" width="15" height="15" fill="#a8c8ee" stroke="#10204a" stroke-width="1"/><rect x="459.5" y="108" width="8.5" height="8.5" fill="url(#gWhiteCube)" stroke="#1a1a1a" stroke-width="1"/>
<path d="M503.1 116 H488 V110.5 Q488 108 490.5 108 H492 V104.5 Q492 102 495.5 102 Q499.5 102 499.5 104.5 V108.3 H503.1" fill="none" stroke="#5aa0f0" stroke-width="1.2"/>
<path d="M503.1 114 H490 V111 Q490 110 491 110 H494 V105 Q494 104 495.5 104 Q497.5 104 497.5 105 V110.3 H503.1" fill="none" stroke="#e8e8e8" stroke-width="1.2"/>
<rect x="512" y="101.5" width="5.5" height="5.5" fill="#e4e4e4" stroke="#1a1a1a" stroke-width="1"/><rect x="520.5" y="101.5" width="6" height="6" fill="#8ab8ee" stroke="#5aa0f0" stroke-width=".8"/><rect x="511.5" y="110.5" width="6" height="6" fill="#8ab8ee" stroke="#5aa0f0" stroke-width=".8"/><rect x="520.5" y="110.5" width="6" height="6" fill="#8ab8ee" stroke="#5aa0f0" stroke-width=".8"/>
<path d="M533.3 59.0L539.3 59.0L536.3 62.5Z" fill="#f0f0f0"/>
<path d="M533.3 83.5L539.3 83.5L536.3 87.0Z" fill="#f0f0f0"/>
<path d="M533.3 107.3L539.3 107.3L536.3 110.8Z" fill="#f0f0f0"/>
<path d="M570.5 63.5 L573.5 60.5 H588 V71.5 L585 74.5 H570.5Z" fill="url(#gWhiteCube)" stroke="#1a1a1a" stroke-width="1"/>
<path d="M570.5 63.5 H585 V74.5 M585 63.5 L588 60.5" fill="none" stroke="#1a1a1a" stroke-width=".8"/><path d="M571 63.5 L574 61 H587.5 L584.5 63.5Z" fill="#f8f8f8"/>
<path d="M585.5 62 L597.5 53.5 V72.5 L585.5 81Z" fill="#9a9a9a" stroke="#1a1a1a" stroke-width="1"/>
<path d="M588 63.5 L595 58.5 V70.5 L588 75.5Z" fill="#a8c8ee" stroke="#10204a" stroke-width=".9"/>
<text x="563.6" y="98.7" font-size="12" fill="#f0f0f0" font-weight="normal" font-family="Liberation Sans" font-style="normal" textLength="39.5" lengthAdjust="spacingAndGlyphs" >Section</text>
<text x="569.2" y="114.2" font-size="12" fill="#f0f0f0" font-weight="normal" font-family="Liberation Sans" font-style="normal" textLength="29.4" lengthAdjust="spacingAndGlyphs" >Plane</text>
<path d="M630.4 54.3 V67.8 H643.9" fill="none" stroke="#e0e0e0" stroke-width="1"/>
<path d="M628.7 55.8 L630.4 53.3 L632.1 55.8Z M642.9 66.1 L645.4 67.8 L642.9 69.5Z" fill="#e0e0e0"/>
<path d="M630.4 67.8 L635.4 62.8" stroke="#d8d8d8" stroke-width=".8"/>
<path d="M669.7 54.3 V67.8 H683.2" fill="none" stroke="#e0e0e0" stroke-width="1"/>
<path d="M668.0 55.8 L669.7 53.3 L671.4 55.8Z M682.2 66.1 L684.7 67.8 L682.2 69.5Z" fill="#e0e0e0"/>
<path d="M669.7 67.8 L674.7 62.8" stroke="#d8d8d8" stroke-width=".8"/>
<path d="M697.8 54.3 V67.8 H711.3" fill="none" stroke="#e0e0e0" stroke-width="1"/>
<path d="M696.1 55.8 L697.8 53.3 L699.5 55.8Z M710.3 66.1 L712.8 67.8 L710.3 69.5Z" fill="#e0e0e0"/>
<path d="M697.8 67.8 L702.8 62.8" stroke="#d8d8d8" stroke-width=".8"/>
<path d="M721.7 54.3 V67.8 H735.2" fill="none" stroke="#e0e0e0" stroke-width="1"/>
<path d="M720.0 55.8 L721.7 53.3 L723.4 55.8Z M734.2 66.1 L736.7 67.8 L734.2 69.5Z" fill="#e0e0e0"/>
<path d="M721.7 67.8 L726.7 62.8" stroke="#d8d8d8" stroke-width=".8"/>
<path d="M745.5 54.3 V67.8 H759.0" fill="none" stroke="#e0e0e0" stroke-width="1"/>
<path d="M743.8 55.8 L745.5 53.3 L747.2 55.8Z M758.0 66.1 L760.5 67.8 L758.0 69.5Z" fill="#e0e0e0"/>
<path d="M745.5 67.8 L750.5 62.8" stroke="#d8d8d8" stroke-width=".8"/>
<path d="M630.4 78.2 V91.7 H643.9" fill="none" stroke="#e0e0e0" stroke-width="1"/>
<path d="M628.7 79.7 L630.4 77.2 L632.1 79.7Z M642.9 90.0 L645.4 91.7 L642.9 93.4Z" fill="#e0e0e0"/>
<path d="M630.4 91.7 L635.4 86.7" stroke="#d8d8d8" stroke-width=".8"/>
<path d="M669.7 78.2 V91.7 H683.2" fill="none" stroke="#e0e0e0" stroke-width="1"/>
<path d="M668.0 79.7 L669.7 77.2 L671.4 79.7Z M682.2 90.0 L684.7 91.7 L682.2 93.4Z" fill="#e0e0e0"/>
<path d="M669.7 91.7 L674.7 86.7" stroke="#d8d8d8" stroke-width=".8"/>
<path d="M697.8 78.2 V91.7 H711.3" fill="none" stroke="#e0e0e0" stroke-width="1"/>
<path d="M696.1 79.7 L697.8 77.2 L699.5 79.7Z M710.3 90.0 L712.8 91.7 L710.3 93.4Z" fill="#e0e0e0"/>
<path d="M697.8 91.7 L702.8 86.7" stroke="#d8d8d8" stroke-width=".8"/>
<path d="M721.7 78.2 V91.7 H735.2" fill="none" stroke="#e0e0e0" stroke-width="1"/>
<path d="M720.0 79.7 L721.7 77.2 L723.4 79.7Z M734.2 90.0 L736.7 91.7 L734.2 93.4Z" fill="#e0e0e0"/>
<path d="M721.7 91.7 L726.7 86.7" stroke="#d8d8d8" stroke-width=".8"/>
<path d="M745.5 78.2 V91.7 H759.0" fill="none" stroke="#e0e0e0" stroke-width="1"/>
<path d="M743.8 79.7 L745.5 77.2 L747.2 79.7Z M758.0 90.0 L760.5 91.7 L758.0 93.4Z" fill="#e0e0e0"/>
<path d="M745.5 91.7 L750.5 86.7" stroke="#d8d8d8" stroke-width=".8"/>
<path d="M630.4 102.0 V115.5 H643.9" fill="none" stroke="#e0e0e0" stroke-width="1"/>
<path d="M628.7 103.5 L630.4 101.0 L632.1 103.5Z M642.9 113.8 L645.4 115.5 L642.9 117.2Z" fill="#e0e0e0"/>
<path d="M630.4 115.5 L635.4 110.5" stroke="#d8d8d8" stroke-width=".8"/>
<path d="M669.7 102.0 V115.5 H683.2" fill="none" stroke="#e0e0e0" stroke-width="1"/>
<path d="M668.0 103.5 L669.7 101.0 L671.4 103.5Z M682.2 113.8 L684.7 115.5 L682.2 117.2Z" fill="#e0e0e0"/>
<path d="M669.7 115.5 L674.7 110.5" stroke="#d8d8d8" stroke-width=".8"/>
<rect x="629.0" y="66.4" width="2.8" height="2.8" fill="#2a2a2a" stroke="#4a90f0" stroke-width=".85"/>
<circle cx="637.5" cy="56" r="3" fill="#f0a020"/><circle cx="637.5" cy="55.5" r="1.8" fill="#ffe080"/><rect x="636.5" y="59" width="2" height="3" fill="#ccc"/>
<rect x="676.5" y="53.5" width="7" height="9" fill="#f0f0f0" stroke="#1a1a1a" stroke-width="1"/><rect x="678" y="55" width="4" height="1.5" fill="#5aa0f0"/><path d="M678 59 H682" stroke="#333" stroke-width=".8"/>
<path d="M697.8 67.8 L708 58.5" stroke="#5aa0f0" stroke-width="1.4"/>
<rect x="726.5" y="54.5" width="9.5" height="7" fill="#f0f0f0" stroke="#1a1a1a" stroke-width="1"/><path d="M728 57 H734.5 M728 59.5 H734.5" stroke="#555" stroke-width=".8"/>
<circle cx="754.5" cy="58.5" r="5.3" fill="#5aa8d0" stroke="#1a2a3a" stroke-width="1"/><path d="M752 56 Q754 54.5 755.5 56 Q754 58 752 56Z M756 59 Q758.5 58 758.5 61 Q757 62 756 59Z" fill="#3c7a3a"/>
<path d="M636 86.5 Q636 81.5 641 81.5 H643 M641.5 79.5 L643.5 81.5 L641.5 83.5" fill="none" stroke="#e0e0e0" stroke-width="1.1"/><text x="637.5" y="91" font-size="8" font-weight="bold" fill="#5aa0f0" font-family="Liberation Sans">x</text>
<path d="M674.5 84 Q676 80.5 679 81 Q682 82 681 85.5 Q680 87 678.5 87" fill="none" stroke="#e0e0e0" stroke-width="1"/><path d="M673.5 82 L674.5 85 L677 83.5Z" fill="#e0e0e0"/>
<rect x="696.4" y="90.1" width="2.8" height="2.8" fill="#2a2a2a" stroke="#4a90f0" stroke-width=".85"/>
<text x="729.5" y="85" font-size="9" font-weight="bold" fill="#5aa0f0" font-family="Liberation Sans">Z</text>
<text x="753" y="85" font-size="9" font-weight="bold" fill="#5aa0f0" font-family="Liberation Sans">3</text>
<rect x="636.5" y="102.5" width="7.5" height="5.5" fill="#a8c8ee" stroke="#10204a" stroke-width="1"/>
<path d="M649.6 59.5L655.6 59.5L652.6 63.0Z" fill="#f0f0f0"/>
<path d="M649.6 83.2L655.6 83.2L652.6 86.8Z" fill="#f0f0f0"/>
<path d="M649.6 107.2L655.6 107.2L652.6 110.8Z" fill="#f0f0f0"/>
<rect x="664.5" y="98.5" width="99" height="20.5" fill="url(#gDrop)" stroke="#2e2e2e" stroke-width="1"/>
<path d="M669.7 102.5 V116.0 H683.2" fill="none" stroke="#e0e0e0" stroke-width="1"/>
<path d="M668.0 104.0 L669.7 101.5 L671.4 104.0Z M682.2 114.3 L684.7 116.0 L682.2 117.7Z" fill="#e0e0e0"/>
<circle cx="677.8" cy="106.2" r="5.3" fill="#5aa8d0" stroke="#1a2a3a" stroke-width="1"/><path d="M675.5 104 Q677 102.5 678.5 104 Q677 106 675.5 104Z M679 107 Q681.5 106 681.5 109 Q680 110 679 107Z" fill="#3c7a3a"/>
<text x="685.8" y="113.3" font-size="12" fill="#f0f0f0" font-weight="normal" font-family="Liberation Sans" font-style="normal" textLength="32.6" lengthAdjust="spacingAndGlyphs" >World</text>
<path d="M754.4 106.8L761.4 106.8L757.9 110.8Z" fill="#f0f0f0"/>
<rect x="769.5" y="50.5" width="121" height="21" fill="url(#gDrop)" stroke="#2e2e2e" stroke-width="1"/>
<rect x="772" y="53" width="16" height="16" fill="#000" />
<path d="M779 56.5 H783.5 M779 56.5 V61 M777 60 H779 M776 63 V64 M775.5 66 L776.5 66.5 M783 60 V61 M780 67 V68" stroke="#ddd" stroke-width=".8" fill="none"/>
<text x="790.7" y="65.2" font-size="12" fill="#f0f0f0" font-weight="normal" font-family="Liberation Sans" font-style="normal" textLength="72.6" lengthAdjust="spacingAndGlyphs" >2D Wireframe</text>
<path d="M879.5 58.8L886.5 58.8L883.0 62.8Z" fill="#f0f0f0"/>
<rect x="769.5" y="74.5" width="121" height="21" fill="url(#gDrop)" stroke="#2e2e2e" stroke-width="1"/>
<rect x="773" y="79" width="13.5" height="13" fill="#2a2a2a" stroke="#111" stroke-width=".6"/><path d="M777 91 V84 H785 M779 91 V86 H785" stroke="#f0f0f0" stroke-width="1" fill="none"/>
<text x="790.1" y="89.2" font-size="12" fill="#f0f0f0" font-weight="normal" font-family="Liberation Sans" font-style="normal" textLength="73.3" lengthAdjust="spacingAndGlyphs" >Unsaved View</text>
<path d="M879.5 82.8L886.5 82.8L883.0 86.8Z" fill="#f0f0f0"/>
<rect x="773.5" y="102.5" width="15" height="12.5" fill="#cfe4f8" stroke="#4a90e0" stroke-width="1"/>
<path d="M776.5 106 L779.5 104 H786.5 L783.5 106Z" fill="#7cd0ff"/><path d="M776.5 106 H783.5 V113.5 H776.5Z" fill="#2a8ae0"/><path d="M783.5 106 L786.5 104 V111.5 L783.5 113.5Z" fill="#1a5aa0"/>
<path d="M793.9 107.3L798.9 107.3L796.4 110.3Z" fill="#f0f0f0"/>
<rect x="896.5" y="49.5" width="43" height="71" fill="url(#gCull)" stroke="#34486e" stroke-width="1"/>
<defs><clipPath id="cullClip"><path d="M902 82.5 L932.5 53.5 V82.5Z"/></clipPath></defs>
<path d="M903 60 L910 53 H932 V74.5 L925 81.5 H903Z" fill="#e4ecf8" fill-opacity=".55"/>
<path d="M903 60 H925 V81.5 H903Z M903 60 L910 53 H932 L925 60 M932 53 V74.5 L925 81.5 M914 60 V81.5 M903 70.7 H925 M906.5 56.5 H928.5 M925 70.7 L932 63.7 M921 53 L914 60 M928.5 56.5 V78" fill="none" stroke="#5aa0ff" stroke-width="1"/>
<g clip-path="url(#cullClip)"><path d="M903 60 H925 V81.5 H903Z" fill="#dcdde2"/><path d="M925 60 L932 53 V74.5 L925 81.5Z" fill="#b4b8c2"/><path d="M903 60 H925 V81.5 H903Z M903 60 L910 53 H932 L925 60 M932 53 V74.5 L925 81.5 M914 60 V81.5 M903 70.7 H925 M906.5 56.5 H928.5 M925 70.7 L932 63.7 M921 53 L914 60 M928.5 56.5 V78" fill="none" stroke="#1e1e1e" stroke-width="1.1"/></g>
<path d="M903 60 L910 53 H932 V74.5 L925 81.5 H903Z" fill="none" stroke="#1a1a1a" stroke-width="1"/>
<path d="M903 81.5 L932 53.5" stroke="#1a1a1a" stroke-width="1.1"/>
<text x="899.3" y="98.9" font-size="12" fill="#f4f4f4" font-weight="normal" font-family="Liberation Sans" font-style="normal" textLength="37.7" lengthAdjust="spacingAndGlyphs" >Culling</text>
<path d="M961 61 L968 54 H988 V75 L981 82 H961Z" fill="#e8e8e8" stroke="#1a1a1a" stroke-width="1.1"/>
<path d="M961.5 61 H980.5 V81.5 H961.5Z" fill="#b4cfee"/><path d="M981 61 L988 54 V75 L981 82Z" fill="#c8ccd4"/><path d="M961.5 57 L965 54.5 H987 L980.5 61 H961.5Z" fill="#eef0f4"/>
<rect x="961.5" y="58.5" width="19" height="2.5" fill="#3a8ae8"/>
<rect x="960" y="79.5" width="4" height="4" fill="#4a90f0"/>
<text x="950.9" y="98.9" font-size="12" fill="#f0f0f0" font-weight="normal" font-family="Liberation Sans" font-style="normal" textLength="45.5" lengthAdjust="spacingAndGlyphs" >No Filter</text>
<path d="M970.8 105.1L975.8 105.1L973.3 108.1Z" fill="#f0f0f0"/>
<path d="M1034.5 56 L1046.5 63 V76 L1034.5 83 L1022.5 76 V63Z" fill="none" stroke="#e8e8e8" stroke-width="1"/>
<path d="M1034.5 68.5 V56" stroke="#5aa0f0" stroke-width="1.2"/><path d="M1034.5 68.5 L1022.5 74" stroke="#3cb018" stroke-width="1.2"/><path d="M1034.5 68.5 L1046.5 74" stroke="#e04020" stroke-width="1.2"/>
<rect x="1033" y="54.5" width="3" height="3" fill="#333" stroke="#5aa0f0" stroke-width="1"/><rect x="1021" y="72.5" width="3" height="3" fill="#333" stroke="#3cb018" stroke-width="1"/><rect x="1045" y="72.5" width="3" height="3" fill="#333" stroke="#e04020" stroke-width="1"/><rect x="1033" y="67" width="3" height="3" fill="#333" stroke="#e8e8e8" stroke-width="1"/>
<text x="1020.2" y="98.9" font-size="12" fill="#f0f0f0" font-weight="normal" font-family="Liberation Sans" font-style="normal" textLength="30.4" lengthAdjust="spacingAndGlyphs" >Move</text>
<text x="1018.3" y="114.6" font-size="12" fill="#f0f0f0" font-weight="normal" font-family="Liberation Sans" font-style="normal" textLength="34.1" lengthAdjust="spacingAndGlyphs" >Gizmo</text>
<path d="M1055.2 101.9L1060.2 101.9L1057.7 104.9Z" fill="#f0f0f0"/>
<path d="M1083 67.0 L1090 60.0 H1102.5 L1096 67.0Z" fill="#f0f0f0" stroke="#333" stroke-width=".7"/>
<path d="M1083 63.5 L1090 56.5 H1102.5 L1096 63.5Z" fill="#f0f0f0" stroke="#333" stroke-width=".7"/>
<path d="M1083 60.0 L1090 53.0 H1102.5 L1096 60.0Z" fill="#f0f0f0" stroke="#333" stroke-width=".7"/>
<rect x="1098.5" y="62.5" width="12" height="17" fill="#f4f4f4" stroke="#1a1a1a" stroke-width="1"/><rect x="1100" y="64.5" width="5" height="5" fill="#3a78c8"/><rect x="1107" y="64.5" width="2" height="5" fill="#999"/><path d="M1100.5 73 H1108.5 M1100.5 76 H1108.5" stroke="#444" stroke-width=".8"/>
<text x="1078.8" y="97.2" font-size="12" fill="#f0f0f0" font-weight="normal" font-family="Liberation Sans" font-style="normal" textLength="33.6" lengthAdjust="spacingAndGlyphs" >Layers</text>
<path d="M1092.7 133.0L1099.7 133.0L1096.2 137.0Z" fill="#f0f0f0"/>
<rect x="1149.5" y="50.5" width="6.5" height="13.5" fill="none" stroke="#4a90f0" stroke-width=".8" stroke-dasharray="1 1"/><rect x="1151" y="52" width="3.5" height="3.5" fill="#e8d070"/><rect x="1151" y="58.5" width="3.5" height="3.5" fill="#c8e0f0"/>
<path d="M1157 53 L1163 58.5 L1160 59 L1161.5 63 L1160 63.5 L1158.5 59.5 L1157 61Z" fill="#f0e890" stroke="#1a2a4a" stroke-width=".8"/>
<text x="1137.6" y="81.3" font-size="12" fill="#f0f0f0" font-weight="normal" font-family="Liberation Sans" font-style="normal" textLength="39.0" lengthAdjust="spacingAndGlyphs" >Groups</text>
<path d="M1153.6 133.0L1160.6 133.0L1157.1 137.0Z" fill="#f0f0f0"/>
<path d="M1205.5 57 H1214 V63 H1230.5 V74.5 H1205.5Z" fill="url(#gWhiteCube)" stroke="#1e1e1e" stroke-width="1"/>
<text x="1204.6" y="97.2" font-size="12" fill="#f0f0f0" font-weight="normal" font-family="Liberation Sans" font-style="normal" textLength="25.6" lengthAdjust="spacingAndGlyphs" >View</text>
<path d="M1214.3 133.0L1221.3 133.0L1217.8 137.0Z" fill="#f0f0f0"/>
<rect x="0" y="142.5" width="1366" height="30.5" fill="#3b3b3b" />
<rect x="0" y="143" width="1366" height="1" fill="#7a7a7a" />
<path d="M0 169 H12 Q19 169 21 160 Q23.5 148 31 148 H136 Q143.5 148 146 160 Q148 169 155 169 H1366 V173 H0Z" fill="url(#gFtab)"/>
<rect x="0" y="168.5" width="1366" height="4.5" fill="#5e5e5e" />
<text x="32.3" y="163.0" font-size="12" fill="#eeeeee" font-weight="normal" font-family="Liberation Sans" font-style="normal" textLength="55.0" lengthAdjust="spacingAndGlyphs" >Drawing1*</text>
<path d="M124.5 154.5 L131.5 161.5 M131.5 154.5 L124.5 161.5" stroke="#3a3a3a" stroke-width="1.6"/>
<path d="M151.8 151.8 H167 Q171 152 173.5 165.8 H159.5 Q155.5 165.8 151.8 151.8Z" fill="#4c4c4c" stroke="#5a5a5a" stroke-width=".8"/>
<path d="M162.4 156 V162.5 M159.2 159.2 H165.6" stroke="#222" stroke-width="3.4" stroke-linecap="round" opacity=".5"/><path d="M162.4 156 V162.5 M159.2 159.2 H165.6" stroke="#d4d4d4" stroke-width="2" stroke-linecap="round"/>
<svg x="0" y="173" width="1366" height="536" viewBox="0 0 1366 536"><rect width="1366" height="536" fill="#212830"/><path d="M0.00 535.56L1.26 536.00M0.00 520.95L43.19 536.00M0.00 491.72L127.06 536.00M0.00 477.11L169.00 536.00M0.00 462.50L210.94 536.00M0.00 447.88L252.87 536.00M0.00 418.66L336.75 536.00M0.00 404.04L378.68 536.00M0.00 389.43L420.62 536.00M0.00 374.82L462.56 536.00M0.00 345.59L546.43 536.00M0.00 330.97L588.37 536.00M0.00 316.36L630.30 536.00M0.00 301.75L672.24 536.00M0.00 272.52L756.11 536.00M0.00 257.91L798.05 536.00M0.00 243.29L839.98 536.00M0.00 228.68L881.92 536.00M0.00 17.21L35.27 0.00M0.00 199.45L965.79 536.00M0.00 51.80L106.13 0.00M-0.00 184.84L1007.73 536.00M0.00 69.09L141.56 0.00M0.00 170.23L1049.67 536.00M0.00 86.38L176.99 0.00M-0.00 155.61L1091.60 536.00M0.00 103.67L212.42 0.00M0.00 126.39L1175.48 536.00M0.00 138.26L283.28 0.00M0.00 111.77L1217.41 536.00M0.00 155.55L318.71 0.00M0.00 97.16L1259.35 536.00M0.00 172.84L354.14 0.00M0.00 82.55L1301.29 536.00M0.00 190.13L389.57 0.00M0.00 53.32L1366.00 529.32M0.00 224.72L460.43 0.00M0.00 38.71L1366.00 514.71M0.00 242.01L495.86 0.00M0.00 24.09L1366.00 500.10M0.00 259.30L531.29 0.00M0.00 9.48L1366.00 485.48M0.00 276.59L566.72 0.00M56.67 0.00L1366.00 456.26M0.00 311.18L637.58 0.00M98.61 0.00L1366.00 441.64M0.00 328.47L673.01 0.00M140.54 0.00L1366.00 427.03M0.00 345.76L708.44 -0.00M182.48 0.00L1366.00 412.42M0.00 363.05L743.87 0.00M266.35 0.00L1366.00 383.19M0.00 397.64L814.73 0.00M308.29 0.00L1366.00 368.58M0.00 414.93L850.16 0.00M350.22 0.00L1366.00 353.96M0.00 432.22L885.59 0.00M392.16 0.00L1366.00 339.35M0.00 449.51L921.02 0.00M476.03 0.00L1366.00 310.12M0.00 484.10L991.88 0.00M517.97 0.00L1366.00 295.51M0.00 501.39L1027.31 0.00M559.91 -0.00L1366.00 280.90M0.00 518.68L1062.74 0.00M601.84 0.00L1366.00 266.28M0.00 535.97L1098.17 0.00M685.72 0.00L1366.00 237.06M70.80 536.00L1169.03 0.00M727.65 0.00L1366.00 222.44M106.23 536.00L1204.46 0.00M769.59 0.00L1366.00 207.83M141.66 536.00L1239.89 0.00M811.53 0.00L1366.00 193.22M177.09 536.00L1275.32 0.00M895.40 0.00L1366.00 163.99M247.95 536.00L1346.18 0.00M937.33 0.00L1366.00 149.38M283.38 536.00L1366.00 7.62M979.27 0.00L1366.00 134.76M318.81 536.00L1366.00 24.91M1021.21 0.00L1366.00 120.15M354.24 536.00L1366.00 42.20M1105.08 0.00L1366.00 90.92M425.10 536.00L1366.00 76.79M1147.02 0.00L1366.00 76.31M460.53 536.00L1366.00 94.08M1188.95 0.00L1366.00 61.69M495.96 536.00L1366.00 111.37M1230.89 0.00L1366.00 47.08M531.39 536.00L1366.00 128.66M1314.76 0.00L1366.00 17.85M602.25 536.00L1366.00 163.25M1356.70 0.00L1366.00 3.24M637.68 536.00L1366.00 180.54M673.11 536.00L1366.00 197.83M708.54 536.00L1366.00 215.12M779.40 536.00L1366.00 249.71M814.83 536.00L1366.00 267.00M850.26 536.00L1366.00 284.29M885.69 536.00L1366.00 301.58M956.55 536.00L1366.00 336.17M991.98 536.00L1366.00 353.46M1027.41 536.00L1366.00 370.75M1062.84 536.00L1366.00 388.04M1133.70 536.00L1366.00 422.63M1169.13 536.00L1366.00 439.92M1204.56 536.00L1366.00 457.21M1239.99 536.00L1366.00 474.50M1310.85 536.00L1366.00 509.09M1346.28 536.00L1366.00 526.38" stroke="#2b303d" stroke-width="1" fill="none"/><path d="M0.00 506.34L85.13 536.00M0.00 433.27L294.81 536.00M0.00 360.20L504.49 536.00M0.00 287.13L714.18 536.00M0.00 214.07L923.86 536.00M0.00 34.50L70.70 0.00M0.00 141.00L1133.54 536.00M0.00 120.96L247.85 -0.00M0.00 67.93L1343.22 536.00M0.00 207.42L425.00 0.00M14.73 0.00L1366.00 470.87M0.00 293.88L602.15 0.00M224.41 0.00L1366.00 397.80M0.00 380.34L779.30 0.00M434.10 0.00L1366.00 324.74M-0.00 466.80L956.45 0.00M643.78 -0.00L1366.00 251.67M35.37 536.00L1133.60 0.00M853.46 0.00L1366.00 178.60M212.52 536.00L1310.75 0.00M1063.14 0.00L1366.00 105.53M389.67 536.00L1366.00 59.49M1272.83 0.00L1366.00 32.47M566.82 536.00L1366.00 145.95M743.97 536.00L1366.00 232.41M921.12 536.00L1366.00 318.87M1098.27 536.00L1366.00 405.33M1275.42 536.00L1366.00 491.79" stroke="#3c4055" stroke-width="1.1" fill="none"/><path d="M0.00 360.20L504.49 536.00" stroke="#7c2a30" stroke-width="1.1" fill="none"/><path d="M633.6 378.4 L844.5 275.4 L1016.4 335.4 L805.4 438.4 Z" stroke="#f0f0f0" stroke-width="1" fill="none" shape-rendering="crispEdges"/><path d="M997.0 328.9L1054.7 348.8" stroke="#ff8a80" stroke-width="1" fill="none" shape-rendering="crispEdges"/><path d="M1016.4 335.4L1048.6 319.1" stroke="#76e070" stroke-width="1" fill="none" shape-rendering="crispEdges"/><path d="M1016.5 289.0L1016.5 358.6" stroke="#7d7df5" stroke-width="1" fill="none" shape-rendering="crispEdges"/></svg>
<text x="3.1" y="190.8" font-size="12" fill="#dadada" font-weight="normal" font-family="Liberation Sans" font-style="normal" textLength="173.9" lengthAdjust="spacingAndGlyphs" >[−][Custom View][2D Wireframe]</text>
<rect x="1357.5" y="173" width="7" height="536" fill="#bcd0ea" />
<rect x="1364.5" y="173" width="1" height="536" fill="#40c8f0" />
<rect x="1365.5" y="173" width="0.5" height="536" fill="#000" />
<rect x="1296.5" y="188.5" width="11" height="4" fill="#f0f0f0" stroke="#111" stroke-width=".8"/>
<rect x="1319" y="182.5" width="8" height="8" fill="#f0f0f0" stroke="#111" stroke-width=".8"/>
<rect x="1316.5" y="185" width="8.5" height="8.5" fill="#f0f0f0" stroke="#111" stroke-width=".8"/><rect x="1319" y="187.5" width="3.5" height="3.5" fill="#111"/>
<path d="M1337.5 184 L1346 192 M1346 184 L1337.5 192" stroke="#f4f4f4" stroke-width="2.2"/>
<defs><radialGradient id="gShadow" cx=".5" cy=".45" r=".55"><stop offset="0" stop-color="#12151a"/><stop offset=".8" stop-color="#1a1e25"/><stop offset="1" stop-color="#222830" stop-opacity="0"/></radialGradient></defs>
<ellipse cx="1295.2" cy="283" rx="48.2" ry="21.5" fill="#5d6169"/>
<ellipse cx="1295.2" cy="283" rx="37.3" ry="14.6" fill="#1d2129"/>
<ellipse cx="1296" cy="281" rx="31" ry="11.5" fill="#15181e"/>
<text x="0" y="0" font-size="14.5" font-weight="bold" fill="#d6d6d6" font-family="Liberation Sans" transform="matrix(1.05,-0.3,0.4,0.68,1254.5,301.5)">S</text>
<text x="0" y="0" font-size="13.5" font-weight="bold" fill="#d6d6d6" font-family="Liberation Sans" transform="matrix(1.0,-0.45,0.55,0.62,1324,299)">E</text>
<text x="0" y="0" font-size="11" font-weight="bold" fill="#d0d0d0" font-family="Liberation Sans" transform="matrix(0.95,-0.35,0.3,0.6,1261,269)">W</text>
<text x="0" y="0" font-size="11" font-weight="bold" fill="#d0d0d0" font-family="Liberation Sans" transform="matrix(0.95,0.35,-0.3,0.6,1315,265)">N</text>
<polygon points="1293.2,234.5 1320.3,242.3 1297.0,251.5 1269.9,243.4" fill="#dcdcdc"/>
<polygon points="1269.9,243.4 1297.0,251.5 1297.2,286.5 1270.5,275.0" fill="url(#gVC)"/>
<polygon points="1297.0,251.5 1320.3,242.3 1319.2,272.5 1297.2,286.5" fill="#cdcdcd"/>
<path d="M1269.9 243.4L1297.0 251.5L1320.3 242.3 M1297.0 251.5L1297.2 286.5" stroke="#555" stroke-width="1" stroke-dasharray="3 2" fill="none"/>
<ellipse cx="1297" cy="253" rx="3" ry="2.5" fill="#c4ccd8"/>
<text x="0" y="0" font-size="7.5" font-weight="bold" fill="#555" font-family="Liberation Sans" transform="matrix(0.9,0.36,0,1,1274,264)" textLength="20" lengthAdjust="spacingAndGlyphs">FRONT</text>
<text x="0" y="0" font-size="7.5" font-weight="bold" fill="#555" font-family="Liberation Sans" transform="matrix(0.9,-0.4,0,1,1299.5,270)" textLength="17" lengthAdjust="spacingAndGlyphs">RIGHT</text>
<text x="0" y="0" font-size="6" font-weight="bold" fill="#777" font-family="Liberation Sans" transform="matrix(0.9,0.3,-0.6,0.5,1291,242)">TOP</text>
<rect x="1271" y="324.2" width="48" height="17.5" rx="3.5" fill="#c9cad6" stroke="#9a9ba6" stroke-width=".6"/>
<text x="1275.2" y="335.8" font-size="11" fill="#555" font-weight="normal" font-family="Liberation Sans" font-style="normal" textLength="24.3" lengthAdjust="spacingAndGlyphs" >WCS</text>
<path d="M1305 330.5 H1314 L1309.5 335Z" fill="#e0e0e8" stroke="#666" stroke-width=".7"/>
<rect x="1321.8" y="367.2" width="32.2" height="211.2" rx="3.5" fill="#888b90" fill-opacity=".95" stroke="#9a9da2" stroke-width=".8"/>
<circle cx="1347.6" cy="371.8" r="2.8" fill="#9a9da2" stroke="#6a6d72" stroke-width=".6"/><path d="M1346.3 370.5 L1348.9 373.1 M1348.9 370.5 L1346.3 373.1" stroke="#eee" stroke-width=".7"/>
<path d="M1338 386 H1349 V397 Q1349 407.5 1338 407.5 Q1327.5 407.5 1327.5 396.5 Q1327.5 386 1338 386Z" fill="none" stroke="#4e5156" stroke-width="1"/>
<circle cx="1337.8" cy="396.5" r="6" fill="none" stroke="#4e5156" stroke-width="1"/><path d="M1333 400 L1329.5 404 M1342.5 400 L1346 404" stroke="#4e5156" stroke-width="1"/>
<path d="M1335.5 416 H1341 L1338.2 419Z" fill="#4e5156"/>
<path d="M1332 450 Q1328 446 1326.5 441.5 Q1327 439 1330 441 L1332.5 443.5 V432 Q1332.5 430 1334 430 Q1335.5 430 1335.5 432 V439 V429.5 Q1335.5 428 1337 428 Q1338.5 428 1338.5 429.5 V439 V430.5 Q1338.5 429 1340 429 Q1341.5 429 1341.5 430.5 V440 V433.5 Q1341.5 432 1343 432 Q1344.5 432 1344.5 433.5 V443 Q1344 449 1340 451 H1334Z" fill="none" stroke="#4e5156" stroke-width="1"/>
<path d="M1327 456 L1341 470 M1341 456 L1327 470 M1327 456 H1331 M1327 456 V460 M1341 456 H1337 M1341 456 V460 M1327 470 H1331 M1327 470 V466" stroke="#4e5156" stroke-width="1" fill="none"/>
<circle cx="1340.5" cy="471" r="4.3" fill="#888b90" stroke="#4e5156" stroke-width="1.2"/><path d="M1343.5 474 L1347.5 478" stroke="#4e5156" stroke-width="2"/>
<path d="M1335.5 486 H1341 L1338.2 489Z" fill="#4e5156"/>
<ellipse cx="1337.5" cy="507" rx="10.5" ry="4.5" fill="none" stroke="#4e5156" stroke-width="1"/>
<path d="M1335.5 515 V502 H1332.5 L1337.5 495 L1342.5 502 H1339.5 V515Z" fill="#888b90" stroke="#4e5156" stroke-width="1"/>
<path d="M1327 509 L1331 506 V512Z" fill="#4e5156"/>
<path d="M1335.5 524.5 H1341 L1338.2 527.5Z" fill="#4e5156"/>
<rect x="1326.5" y="536.5" width="6" height="6" fill="none" stroke="#4e5156"/><rect x="1334.5" y="536.5" width="6" height="6" fill="none" stroke="#4e5156"/><rect x="1342.5" y="536.5" width="6" height="6" fill="none" stroke="#4e5156"/>
<rect x="1326.5" y="545.5" width="16" height="12.5" fill="none" stroke="#4e5156"/><path d="M1332 548.5 L1338.5 551.8 L1332 555Z" fill="#4e5156"/>
<circle cx="1348" cy="572.7" r="3" fill="#8a8d92" stroke="#4e5156" stroke-width=".8"/><path d="M1346.5 572 H1349.5 M1346.5 573.8 L1348 575 L1349.5 573.8" stroke="#4e5156" stroke-width=".7" fill="none"/>
<g stroke="#e4e4e4" stroke-width="1.3" fill="none">
<path d="M16.5 685.2 V638.8 M16.5 685.2 L48.8 669.3 M16.5 685.2 L54.9 698.6"/>
<path d="M10.4 685.6 L18.3 682.8 L23.8 685.2 L17.1 687Z" stroke-width="1"/>
<path d="M21 625.5 H34 L21 637.5 H34.2"/>
<path d="M50 651.6 L56.5 658.5 L63 651.6 M56.5 658.5 V665"/>
<path d="M59.2 684 L72 696.8 M72 684 L59.2 696.8"/>
</g>
<path d="M273.3 708 V685 Q273.3 682 276.3 682 H327 V708Z" fill="url(#gCmd)" stroke="#2a2a2a" stroke-width=".6"/>
<rect x="277.3" y="686.5" width="1.6" height="1.6" fill="#b8b8b8"/><rect x="280.3" y="686.5" width="1.6" height="1.6" fill="#b8b8b8"/>
<rect x="277.3" y="689.5" width="1.6" height="1.6" fill="#b8b8b8"/><rect x="280.3" y="689.5" width="1.6" height="1.6" fill="#b8b8b8"/>
<rect x="277.3" y="692.5" width="1.6" height="1.6" fill="#b8b8b8"/><rect x="280.3" y="692.5" width="1.6" height="1.6" fill="#b8b8b8"/>
<rect x="277.3" y="695.5" width="1.6" height="1.6" fill="#b8b8b8"/><rect x="280.3" y="695.5" width="1.6" height="1.6" fill="#b8b8b8"/>
<rect x="277.3" y="698.5" width="1.6" height="1.6" fill="#b8b8b8"/><rect x="280.3" y="698.5" width="1.6" height="1.6" fill="#b8b8b8"/>
<rect x="277.3" y="701.5" width="1.6" height="1.6" fill="#b8b8b8"/><rect x="280.3" y="701.5" width="1.6" height="1.6" fill="#b8b8b8"/>
<path d="M288.5 691.5 L297.3 698.5 M297.3 691.5 L288.5 698.5" stroke="#f0f0f0" stroke-width="1.8"/>
<path d="M313.5 694 L321 701.5" stroke="#1a1a1a" stroke-width="4.4" stroke-linecap="round"/>
<circle cx="311.8" cy="692.2" r="4.3" fill="#1a1a1a"/>
<path d="M313.5 694 L321 701.5" stroke="#f0f0f0" stroke-width="2.4" stroke-linecap="round"/>
<circle cx="311.8" cy="692.2" r="3.2" fill="#f0f0f0"/>
<path d="M307.5 688 L311.2 691.6" stroke="#1a1a1a" stroke-width="2.6"/><circle cx="311.3" cy="691.6" r="1.5" fill="#1a1a1a"/>
<path d="M315.5 696.5 L319.8 700.8" stroke="#8a9ab0" stroke-width=".7" stroke-dasharray="1 1"/>
<rect x="327" y="682.5" width="765.5" height="25.5" fill="#ffffff" />
<path d="M332.5 690 L335 687.5 H347.5 V700 L345 702.5 H332.5Z" fill="#dde0e8" stroke="#c0c4cc" stroke-width=".6"/><path d="M345 690 L347.5 687.5 V700 L345 702.5Z" fill="#a4acbc"/><path d="M332.5 690 L335 687.5 H347.5 L345 690Z" fill="#f4f6fa"/>
<path d="M351.5 692.5 H356 L353.7 695Z" fill="#777"/>
<rect x="328.5" y="667" width="235.5" height="15" fill="#5f6062" fill-opacity=".93"/>
<text x="331" y="678.5" font-size="11.6" fill="#e0e0e0" font-family="Liberation Mono" textLength="230" lengthAdjust="spacingAndGlyphs">Specify first corner or [Center]:</text>
<rect x="563.7" y="687.6" width="29.9" height="15.7" rx="2.5" fill="#d6d6d6"/><rect x="598" y="687.6" width="43.6" height="15.7" rx="2.5" fill="#d6d6d6"/>
<text x="363.3" y="699" font-size="11.6" fill="#111" font-family="Liberation Mono" textLength="291.3" lengthAdjust="spacingAndGlyphs"><tspan font-weight="bold">BOX</tspan> Specify other corner or [<tspan fill="#1010e0">C</tspan>ube <tspan fill="#1010e0">L</tspan>ength]:</text>
<path d="M1081.5 696.8 L1085.1 693.2 L1088.7 696.8Z" fill="#111"/>
<rect x="0" y="709" width="1366" height="28" fill="#3b3b3b" />
<rect x="0" y="708.5" width="1366" height="1.2" fill="#666" />
<path d="M12.3 709.5 Q15.5 709.5 16.5 714 L18 722 Q19 726.5 23 726.5 H60 Q64 726.5 65 722 L66.5 714 Q67.5 709.5 70.5 709.5Z" fill="url(#gModelTab)"/>
<path d="M69.5 709.5 Q72.5 709.5 73.5 714 L75 722 Q76 726.5 80 726.5 H126 Q130 726.5 131 722 L132.5 714 Q133.5 709.5 136.5 709.5Z" fill="url(#gLayTab)"/>
<path d="M135 709.5 Q138 709.5 139 714 L140.5 722 Q141.5 726.5 145.5 726.5 H193 Q197 726.5 198 722 L199.5 714 Q200.5 709.5 203.5 709.5Z" fill="url(#gLayTab)"/>
<path d="M207 709.5 H226.7 Q226 716 223 721 Q221 725 215 725 H204.5 Q205.5 717 207 709.5Z" fill="#474747" stroke="#555" stroke-width=".6"/>
<path d="M215 713.8 V720.2 M211.8 717 H218.2" stroke="#d8d8d8" stroke-width="1.8"/>
<text x="23.3" y="721.6" font-size="12" fill="#ffffff" font-weight="bold" font-family="Liberation Sans" font-style="normal" textLength="35.1" lengthAdjust="spacingAndGlyphs" >Model</text>
<text x="80.8" y="721.6" font-size="12" fill="#d8d8d8" font-weight="normal" font-family="Liberation Sans" font-style="normal" textLength="41.7" lengthAdjust="spacingAndGlyphs" >Layout1</text>
<text x="145.8" y="721.6" font-size="12" fill="#d8d8d8" font-weight="normal" font-family="Liberation Sans" font-style="normal" textLength="42.6" lengthAdjust="spacingAndGlyphs" >Layout2</text>
<rect x="724" y="709" width="5" height="28" fill="#333" />
<rect x="729" y="708" width="637" height="29" fill="#6a6a6a" />
<rect x="729.5" y="709" width="636" height="28" fill="#535353" />
<rect x="730.5" y="710.5" width="48.1" height="24.5" fill="#535353" stroke="#6c6c6c" stroke-width="1"/>
<rect x="780.3" y="710.5" width="64.4" height="24.5" fill="#535353" stroke="#6c6c6c" stroke-width="1"/>
<rect x="846.4" y="710.5" width="102.6" height="24.5" fill="#535353" stroke="#6c6c6c" stroke-width="1"/>
<rect x="950.5" y="710.5" width="62.8" height="24.5" fill="#535353" stroke="#6c6c6c" stroke-width="1"/>
<rect x="1014.5" y="710.5" width="42.0" height="24.5" fill="#535353" stroke="#6c6c6c" stroke-width="1"/>
<rect x="1057.5" y="710.5" width="22.0" height="24.5" fill="#535353" stroke="#6c6c6c" stroke-width="1"/>
<rect x="1080.5" y="710.5" width="106.5" height="24.5" fill="#535353" stroke="#6c6c6c" stroke-width="1"/>
<rect x="1188.0" y="710.5" width="40.0" height="24.5" fill="#535353" stroke="#6c6c6c" stroke-width="1"/>
<rect x="1229.0" y="710.5" width="24.4" height="24.5" fill="#535353" stroke="#6c6c6c" stroke-width="1"/>
<rect x="1254.4" y="710.5" width="26.1" height="24.5" fill="#535353" stroke="#6c6c6c" stroke-width="1"/>
<rect x="1281.5" y="710.5" width="31.9" height="24.5" fill="#535353" stroke="#6c6c6c" stroke-width="1"/>
<rect x="1314.4" y="710.5" width="49.0" height="24.5" fill="#535353" stroke="#6c6c6c" stroke-width="1"/>
<text x="734.1" y="726.9" font-size="12.5" fill="#f2f2f2" font-weight="normal" font-family="Liberation Sans" font-style="normal" textLength="41.1" lengthAdjust="spacingAndGlyphs" >MODEL</text>
<rect x="784" y="713.5" width="18" height="15.5" rx="5" fill="#2a6ad0" opacity=".35"/>
<g stroke="#3a90ff" stroke-width="1.2">
<path d="M787.0 715 V728"/>
<path d="M790.5 715 V728"/>
<path d="M794.0 715 V728"/>
<path d="M797.5 715 V728"/>
<path d="M785.5 716.5 H800.5" stroke-dasharray="1.2 2.3"/>
<path d="M785.5 719.5 H800.5" stroke-dasharray="1.2 2.3"/>
<path d="M785.5 722.5 H800.5" stroke-dasharray="1.2 2.3"/>
<path d="M785.5 725.5 H800.5" stroke-dasharray="1.2 2.3"/>
</g>
<rect x="809.7" y="716.2" width="1.1" height="1.1" fill="#e4e4e4" />
<rect x="809.7" y="718.7" width="1.1" height="1.1" fill="#e4e4e4" />
<rect x="809.7" y="721.2" width="1.1" height="1.1" fill="#e4e4e4" />
<rect x="809.7" y="723.7" width="1.1" height="1.1" fill="#e4e4e4" />
<rect x="809.7" y="726.2" width="1.1" height="1.1" fill="#e4e4e4" />
<rect x="809.7" y="728.7" width="1.1" height="1.1" fill="#e4e4e4" />
<rect x="812.3000000000001" y="716.2" width="1.1" height="1.1" fill="#e4e4e4" />
<rect x="812.3000000000001" y="718.7" width="1.1" height="1.1" fill="#e4e4e4" />
<rect x="812.3000000000001" y="721.2" width="1.1" height="1.1" fill="#e4e4e4" />
<rect x="812.3000000000001" y="723.7" width="1.1" height="1.1" fill="#e4e4e4" />
<rect x="812.3000000000001" y="726.2" width="1.1" height="1.1" fill="#e4e4e4" />
<rect x="812.3000000000001" y="728.7" width="1.1" height="1.1" fill="#e4e4e4" />
<rect x="814.9000000000001" y="716.2" width="1.1" height="1.1" fill="#e4e4e4" />
<rect x="814.9000000000001" y="718.7" width="1.1" height="1.1" fill="#e4e4e4" />
<rect x="814.9000000000001" y="721.2" width="1.1" height="1.1" fill="#e4e4e4" />
<rect x="814.9000000000001" y="723.7" width="1.1" height="1.1" fill="#e4e4e4" />
<rect x="814.9000000000001" y="726.2" width="1.1" height="1.1" fill="#e4e4e4" />
<rect x="814.9000000000001" y="728.7" width="1.1" height="1.1" fill="#e4e4e4" />
<rect x="817.5" y="716.2" width="1.1" height="1.1" fill="#e4e4e4" />
<rect x="817.5" y="718.7" width="1.1" height="1.1" fill="#e4e4e4" />
<rect x="817.5" y="721.2" width="1.1" height="1.1" fill="#e4e4e4" />
<rect x="817.5" y="723.7" width="1.1" height="1.1" fill="#e4e4e4" />
<rect x="817.5" y="726.2" width="1.1" height="1.1" fill="#e4e4e4" />
<rect x="817.5" y="728.7" width="1.1" height="1.1" fill="#e4e4e4" />
<rect x="820.1" y="716.2" width="1.1" height="1.1" fill="#e4e4e4" />
<rect x="820.1" y="718.7" width="1.1" height="1.1" fill="#e4e4e4" />
<rect x="820.1" y="721.2" width="1.1" height="1.1" fill="#e4e4e4" />
<rect x="820.1" y="723.7" width="1.1" height="1.1" fill="#e4e4e4" />
<rect x="820.1" y="726.2" width="1.1" height="1.1" fill="#e4e4e4" />
<rect x="820.1" y="728.7" width="1.1" height="1.1" fill="#e4e4e4" />
<rect x="822.7" y="716.2" width="1.1" height="1.1" fill="#e4e4e4" />
<rect x="822.7" y="718.7" width="1.1" height="1.1" fill="#e4e4e4" />
<rect x="822.7" y="721.2" width="1.1" height="1.1" fill="#e4e4e4" />
<rect x="822.7" y="723.7" width="1.1" height="1.1" fill="#e4e4e4" />
<rect x="822.7" y="726.2" width="1.1" height="1.1" fill="#e4e4e4" />
<rect x="822.7" y="728.7" width="1.1" height="1.1" fill="#e4e4e4" />
<path d="M833.0 721.0L840.0 721.0L836.5 725.0Z" fill="#f0f0f0"/>
<path d="M853.5 713.5 V727.5 H866 M853.5 723.5 H857.5 V727.5" stroke="#dcdcdc" stroke-width="1.1" fill="none"/>
<circle cx="882.5" cy="721.5" r="6.5" fill="none" stroke="#dcdcdc" stroke-width="1.2"/><path d="M877 723 H891.5 L886.5 716.5" stroke="#dcdcdc" stroke-width="1.1" fill="none"/>
<path d="M899.5 721.0L906.5 721.0L903.0 725.0Z" fill="#f0f0f0"/>
<path d="M913.5 713 L930.5 729.5 M921.5 711.5 V731" stroke="#c8c8c8" stroke-width="1.1"/><circle cx="922" cy="720.5" r="1.2" fill="#ddd"/>
<path d="M938.0 721.0L945.0 721.0L941.5 725.0Z" fill="#f0f0f0"/>
<path d="M953.5 728.5 H969 M953.5 728.5 L968.5 715" stroke="#3a90ff" stroke-width="1.4" fill="none"/><rect x="960" y="721" width="2.5" height="2.5" fill="#3a90ff"/>
<rect x="980.5" y="716" width="13" height="13" fill="none" stroke="#3a90ff" stroke-width="1.4"/><rect x="979" y="714.5" width="4" height="4" fill="#20c020" stroke="#111" stroke-width=".6"/>
<path d="M1001.5 721.0L1008.5 721.0L1005.0 725.0Z" fill="#f0f0f0"/>
<path d="M1018 714.5 H1034.5 M1018 718.5 H1031 M1018 722.5 H1034.5 M1018 726.5 H1027" stroke="#dcdcdc" stroke-width="2"/>
<path d="M1042.2 721.0L1049.2 721.0L1045.7 725.0Z" fill="#f0f0f0"/>
<rect x="1059.5" y="714.5" width="14" height="14" fill="#eee" stroke="#eee"/>
<rect x="1059.5" y="714.5" width="2" height="2" fill="#555" />
<rect x="1059.5" y="718.5" width="2" height="2" fill="#555" />
<rect x="1059.5" y="722.5" width="2" height="2" fill="#555" />
<rect x="1059.5" y="726.5" width="2" height="2" fill="#555" />
<rect x="1061.5" y="716.5" width="2" height="2" fill="#555" />
<rect x="1061.5" y="720.5" width="2" height="2" fill="#555" />
<rect x="1061.5" y="724.5" width="2" height="2" fill="#555" />
<rect x="1063.5" y="714.5" width="2" height="2" fill="#555" />
<rect x="1063.5" y="718.5" width="2" height="2" fill="#555" />
<rect x="1063.5" y="722.5" width="2" height="2" fill="#555" />
<rect x="1063.5" y="726.5" width="2" height="2" fill="#555" />
<rect x="1065.5" y="716.5" width="2" height="2" fill="#555" />
<rect x="1065.5" y="720.5" width="2" height="2" fill="#555" />
<rect x="1065.5" y="724.5" width="2" height="2" fill="#555" />
<rect x="1067.5" y="714.5" width="2" height="2" fill="#555" />
<rect x="1067.5" y="718.5" width="2" height="2" fill="#555" />
<rect x="1067.5" y="722.5" width="2" height="2" fill="#555" />
<rect x="1067.5" y="726.5" width="2" height="2" fill="#555" />
<rect x="1069.5" y="716.5" width="2" height="2" fill="#555" />
<rect x="1069.5" y="720.5" width="2" height="2" fill="#555" />
<rect x="1069.5" y="724.5" width="2" height="2" fill="#555" />
<rect x="1071.5" y="714.5" width="2" height="2" fill="#555" />
<rect x="1071.5" y="718.5" width="2" height="2" fill="#555" />
<rect x="1071.5" y="722.5" width="2" height="2" fill="#555" />
<rect x="1071.5" y="726.5" width="2" height="2" fill="#555" />
<path d="M1084 729 L1090 722 L1093 712.5 L1095 722 L1101 729 L1093 725Z" fill="#3a90ff"/><circle cx="1097.5" cy="716" r="2.7" fill="none" stroke="#3a90ff" stroke-width="1.2"/>
<path d="M1108.5 729 L1114.5 722 L1117 712.5 L1119 722 L1125.5 729 L1117 725Z" fill="#bdbdbd"/><path d="M1119 715 L1123 712 L1121 717 L1124.5 716.5 L1120 722" stroke="#bdbdbd" stroke-width="1.2" fill="none"/>
<path d="M1132.5 729 L1138.5 722 L1141 712.5 L1143 722 L1149.5 729 L1141 725Z" fill="#bdbdbd"/>
<text x="1157.6" y="726.5" font-size="12" fill="#e8e8e8" font-weight="normal" font-family="Liberation Sans" font-style="normal" textLength="13.6" lengthAdjust="spacingAndGlyphs" >1:1</text>
<path d="M1175.0 721.0L1182.0 721.0L1178.5 725.0Z" fill="#f0f0f0"/>
<circle cx="1201.5" cy="721.5" r="5" fill="#bdbdbd" stroke="#bdbdbd" stroke-width="2.2" stroke-dasharray="1.8 1.3"/><circle cx="1201.5" cy="721.5" r="1.8" fill="#535353"/>
<path d="M1217.3 721.0L1224.3 721.0L1220.8 725.0Z" fill="#f0f0f0"/>
<path d="M1241.3 714.5 V729 M1234 721.7 H1248.6" stroke="#dcdcdc" stroke-width="1.6"/>
<circle cx="1268" cy="722" r="8.8" fill="#2a7ae0" opacity=".35"/><circle cx="1268" cy="722" r="7.6" fill="#1052b8" stroke="#3a9aff" stroke-width="1.3"/><path d="M1265.5 724.5 L1267 725.5 L1271 719.5" stroke="#8ac0ff" stroke-width=".9" fill="none"/>
<rect x="1290" y="713.5" width="6.5" height="6.5" fill="none" stroke="#dcdcdc" stroke-width="1.1"/><circle cx="1301.5" cy="721.5" r="3.6" fill="none" stroke="#dcdcdc" stroke-width="1.1"/><path d="M1293.5 729.5 L1297 723 L1300.5 729.5Z" fill="none" stroke="#dcdcdc" stroke-width="1.1"/>
<rect x="1320.5" y="716" width="15" height="11.5" fill="none" stroke="#dcdcdc" stroke-width="1.2"/><path d="M1323.5 724.5 L1327 721 M1323.5 721.5 V724.5 H1326.5 M1332.5 718.5 L1329 722 M1329.5 718.5 H1332.5 V721.5" stroke="#dcdcdc" stroke-width="1.1" fill="none"/>
<path d="M1345 716 H1359.7 M1345 721.3 H1359.7 M1345 726.5 H1359.7" stroke="#dcdcdc" stroke-width="2"/></svg></body></html>
